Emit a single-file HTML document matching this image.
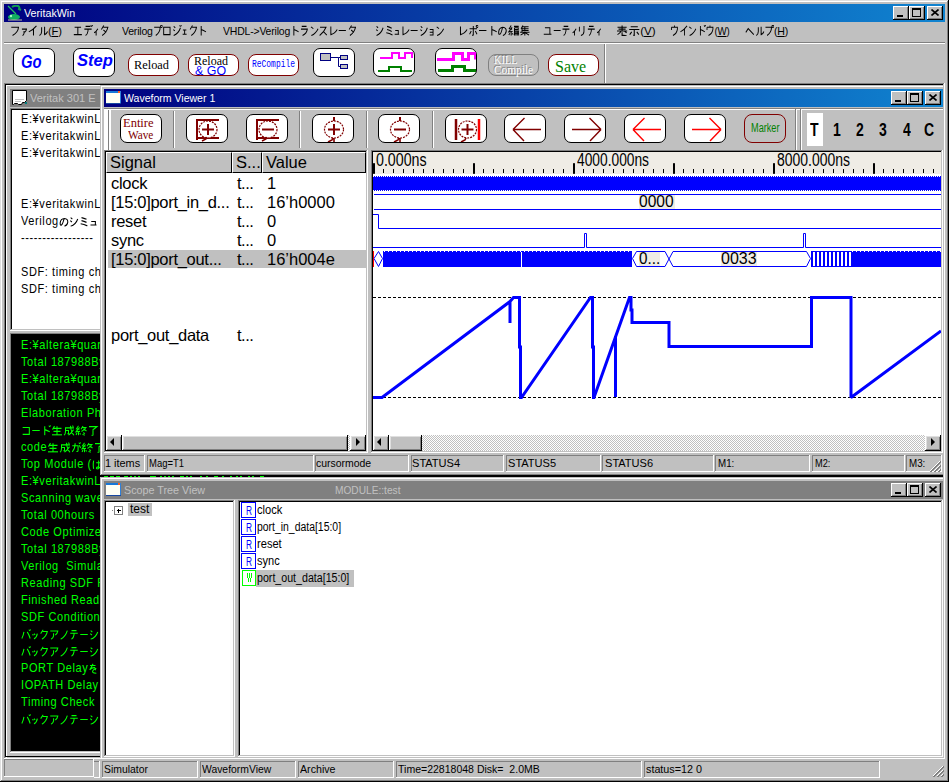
<!DOCTYPE html><html><head><meta charset="utf-8"><style>
html,body{margin:0;padding:0;background:#c0c0c0;overflow:hidden}
#r{position:relative;width:949px;height:782px;overflow:hidden;background:#c0c0c0;font-family:'Liberation Sans', sans-serif;font-size:12px;color:#000}
#r div{box-sizing:border-box}
</style></head><body><div id="r">
<svg width="0" height="0" style="position:absolute"><defs><symbol id="g30d5" viewBox="0 0 12 12"><path vector-effect="non-scaling-stroke" d="M1.5 2.5H10Q9.5 8 3 11.5"/></symbol><symbol id="g30a1" viewBox="0 0 12 12"><path vector-effect="non-scaling-stroke" d="M2 4.5H9.5Q9 7 6.5 8M5.5 6.5V9Q5 11 3 11.5"/></symbol><symbol id="g30a2" viewBox="0 0 12 12"><path vector-effect="non-scaling-stroke" d="M1.5 2H10.5Q10 5 7.5 6.5M5.5 4.5V7.5Q5 10 2.5 11.5"/></symbol><symbol id="g30a4" viewBox="0 0 12 12"><path vector-effect="non-scaling-stroke" d="M10.5 1Q7 5 1.5 7.5M7 4.5V11.5"/></symbol><symbol id="g30eb" viewBox="0 0 12 12"><path vector-effect="non-scaling-stroke" d="M4 2.5V7Q4 10 1.5 11.5M7.5 2V10.5Q9.5 10 11 7"/></symbol><symbol id="g30a8" viewBox="0 0 12 12"><path vector-effect="non-scaling-stroke" d="M2 2.5H10M6 2.5V10.5M1 10.5H11"/></symbol><symbol id="g30c7" viewBox="0 0 12 12"><path vector-effect="non-scaling-stroke" d="M3 1.5H9M1.5 4.5H10.5M6 4.5V6.5Q5.5 10 3 11.5M9.5 0.3L10.5 2M11.3 0L12 1.3"/></symbol><symbol id="g30c6" viewBox="0 0 12 12"><path vector-effect="non-scaling-stroke" d="M3 1.5H9M1.5 4.5H10.5M6 4.5V6.5Q5.5 10 3 11.5"/></symbol><symbol id="g30a3" viewBox="0 0 12 12"><path vector-effect="non-scaling-stroke" d="M9.5 4Q7 7 3 8.5M6.5 6.5V11.5"/></symbol><symbol id="g30bf" viewBox="0 0 12 12"><path vector-effect="non-scaling-stroke" d="M5 0.5L2 5M4.5 2.5H10Q8.5 8 3 11.5M4.5 5.5L8 8"/></symbol><symbol id="g30d7" viewBox="0 0 12 12"><path vector-effect="non-scaling-stroke" d="M1.5 2.5H9Q9 8 3.5 11.5M10.8 0.3a1.2 1.2 0 1 0 0.01 0"/></symbol><symbol id="g30ed" viewBox="0 0 12 12"><path vector-effect="non-scaling-stroke" d="M2 2.5H10V10.5H2Z"/></symbol><symbol id="g30b8" viewBox="0 0 12 12"><path vector-effect="non-scaling-stroke" d="M2 1.5L4 3M1.5 5L3.5 6.5M2 11.5Q8 9.5 10.5 3M9.5 0.3L10.5 2M11.3 0L12 1.3"/></symbol><symbol id="g30b7" viewBox="0 0 12 12"><path vector-effect="non-scaling-stroke" d="M2 1.5L4 3M1.5 5L3.5 6.5M2 11.5Q8 9.5 10.5 3"/></symbol><symbol id="g30a7" viewBox="0 0 12 12"><path vector-effect="non-scaling-stroke" d="M3 5.5H9M6 5.5V10M2.5 10H9.5"/></symbol><symbol id="g30af" viewBox="0 0 12 12"><path vector-effect="non-scaling-stroke" d="M5 0.5L2 5M4.5 2.5H10Q9 8 3.5 11.5"/></symbol><symbol id="g30c8" viewBox="0 0 12 12"><path vector-effect="non-scaling-stroke" d="M4.5 1V11.5M4.5 5Q7.5 6 10.5 7.5"/></symbol><symbol id="g30c9" viewBox="0 0 12 12"><path vector-effect="non-scaling-stroke" d="M4.5 1V11.5M4.5 5Q7.5 6 10.5 7.5M9.5 0.3L10.5 2M11.3 0L12 1.3"/></symbol><symbol id="g30e9" viewBox="0 0 12 12"><path vector-effect="non-scaling-stroke" d="M3 1.5H9M2 4.5H10Q9.5 9 4 11.5"/></symbol><symbol id="g30f3" viewBox="0 0 12 12"><path vector-effect="non-scaling-stroke" d="M2 2L5 4M2.5 11.5Q8 9.5 11 4"/></symbol><symbol id="g30b9" viewBox="0 0 12 12"><path vector-effect="non-scaling-stroke" d="M2 2.5H9.5Q7 8 1.5 11.5M6 7L10.5 11"/></symbol><symbol id="g30ec" viewBox="0 0 12 12"><path vector-effect="non-scaling-stroke" d="M3 1.5V10.5Q8 9.5 11 5"/></symbol><symbol id="g30fc" viewBox="0 0 12 12"><path vector-effect="non-scaling-stroke" d="M1.5 6H10.5"/></symbol><symbol id="g30df" viewBox="0 0 12 12"><path vector-effect="non-scaling-stroke" d="M3 1.5Q6 2 9 3.5M3 5Q6 5.5 9 7M2 8.5Q6 9 10 11"/></symbol><symbol id="g30e5" viewBox="0 0 12 12"><path vector-effect="non-scaling-stroke" d="M3 6H8.5V10M2 10H10"/></symbol><symbol id="g30e7" viewBox="0 0 12 12"><path vector-effect="non-scaling-stroke" d="M3 5H9V11H3M3 8H9"/></symbol><symbol id="g30dd" viewBox="0 0 12 12"><path vector-effect="non-scaling-stroke" d="M1.5 4H10.5M6 1V10.5Q6 11.5 4.5 11M3.5 6.5L1.5 10M8.5 6.5L10.5 10M10.8 0.3a1.2 1.2 0 1 0 0.01 0"/></symbol><symbol id="g306e" viewBox="0 0 12 12"><path vector-effect="non-scaling-stroke" d="M6 3Q4.5 9 3 10Q1 11 1.5 7Q2 3 6.5 2.5Q11 3 10.5 7Q10 10.5 6.5 11.5"/></symbol><symbol id="g7de8" viewBox="0 0 12 12"><path vector-effect="non-scaling-stroke" d="M3.5 0.5L1.5 4L4.5 4.5M4.5 2.5L1 7.5L5 7M3.5 7V11.5M2 9L1 11M4.8 9L5.5 10.5M6.5 1.5H11.5M7 3H11V5H7M7 3V11.5M7 6.5H11.5V11.5M8.5 6.5V11.5M10 6.5V11.5M7 9H11.5"/></symbol><symbol id="g96c6" viewBox="0 0 12 12"><path vector-effect="non-scaling-stroke" d="M4 0.5L2 4M3.5 2H10M6 2V6.5M3 4H10M3 6H10M3 2V8M1 8H11M6 7V11.5M5.5 8.5L1.5 11M6.5 8.5L10.5 11"/></symbol><symbol id="g30e6" viewBox="0 0 12 12"><path vector-effect="non-scaling-stroke" d="M2.5 3H9V10M1 10H11"/></symbol><symbol id="g30ea" viewBox="0 0 12 12"><path vector-effect="non-scaling-stroke" d="M3 2V7M9 1V7Q9 10 5 11.5"/></symbol><symbol id="g8868" viewBox="0 0 12 12"><path vector-effect="non-scaling-stroke" d="M1.5 2.5H10.5M2.5 4.5H9.5M1 6.5H11M6 0.5V6.5M5 6.5Q4 9 1.5 10.5M6 8V11.5Q8 11 10.5 12M8.5 7L10.5 8.5"/></symbol><symbol id="g793a" viewBox="0 0 12 12"><path vector-effect="non-scaling-stroke" d="M2.5 2H9.5M1 5H11M6 5V11.5L5 11M3.5 7.5L1.5 10.5M8.5 7.5L10.5 10.5"/></symbol><symbol id="g30a6" viewBox="0 0 12 12"><path vector-effect="non-scaling-stroke" d="M6 0.5V2.5M2 2.5H10V4.5Q9.5 9 4 11.5M2 2.5V5.5"/></symbol><symbol id="g30d8" viewBox="0 0 12 12"><path vector-effect="non-scaling-stroke" d="M1 8L4 4L11 10.5"/></symbol><symbol id="g30b3" viewBox="0 0 12 12"><path vector-effect="non-scaling-stroke" d="M2 2.5H10V10.5H2"/></symbol><symbol id="g751f" viewBox="0 0 12 12"><path vector-effect="non-scaling-stroke" d="M3.5 1L1.5 5M3 3.5H10.5M6 1V11M2.5 7H9.5M1 11H11"/></symbol><symbol id="g6210" viewBox="0 0 12 12"><path vector-effect="non-scaling-stroke" d="M2 3H11M2.5 3V7Q2.5 10 1 11.5M2.5 6H5.5V9.5L4.5 9.5M7.5 0.5Q8 8 11 11.5M10.5 5Q8.5 9 5.5 11.5M9 0.5L10.5 1.5"/></symbol><symbol id="g7d42" viewBox="0 0 12 12"><path vector-effect="non-scaling-stroke" d="M3.5 0.5L1.5 4L4.5 4.5M4.5 2.5L1 7.5L5 7M3.5 7V11.5M2 9L1 11M4.8 9L5.5 10.5M8 1L6 4.5M7.5 2.5H11Q9.5 5 6.5 7M8.5 4L11.5 6.5M8 8.5L10 9.5M7.5 10.5L10 11.5"/></symbol><symbol id="g4e86" viewBox="0 0 12 12"><path vector-effect="non-scaling-stroke" d="M2 1.5H10Q8 3.5 6 5V11Q6 12 4.5 11.5"/></symbol><symbol id="g304c" viewBox="0 0 12 12"><path vector-effect="non-scaling-stroke" d="M1.5 4H8.5V9Q8.5 11 6.5 10.5M5 1Q5 7 1.5 11M10 3.5L11.5 6.5M9.5 0.3L10.5 2M11.3 0L12 1.3"/></symbol><symbol id="g306f" viewBox="0 0 12 12"><path vector-effect="non-scaling-stroke" d="M2 1.5Q1 6 2 11M5 4H10.5M8 1.5V9.5Q8 11.5 6 11Q4.5 10 6 9Q9 8.5 11 11"/></symbol><symbol id="g30d0" viewBox="0 0 12 12"><path vector-effect="non-scaling-stroke" d="M3.5 3Q3 7 1 10.5M7.5 3Q9.5 6 11 10.5M9.5 0.3L10.5 2M11.3 0L12 1.3"/></symbol><symbol id="g30c3" viewBox="0 0 12 12"><path vector-effect="non-scaling-stroke" d="M2.5 5.5L3.5 7M5 5L6 6.5M9.5 5Q8.5 9.5 4.5 11"/></symbol><symbol id="g30ce" viewBox="0 0 12 12"><path vector-effect="non-scaling-stroke" d="M10 1.5Q8 8 2 11.5"/></symbol><symbol id="g3092" viewBox="0 0 12 12"><path vector-effect="non-scaling-stroke" d="M2.5 2.5H9M6 0.5Q4 5 2 7.5Q5 4.5 8 5Q9 6 9 8M10 6Q6 7 5.5 9Q5 11.5 10 11.5"/></symbol></defs></svg>
<div style="position:absolute;left:0px;top:0px;width:949px;height:1px;background:#dfdfdf"></div>
<div style="position:absolute;left:0px;top:0px;width:1px;height:782px;background:#dfdfdf"></div>
<div style="position:absolute;left:1px;top:1px;width:947px;height:1px;background:#ffffff"></div>
<div style="position:absolute;left:1px;top:1px;width:1px;height:780px;background:#ffffff"></div>
<div style="position:absolute;left:0px;top:781px;width:949px;height:1px;background:#000000"></div>
<div style="position:absolute;left:948px;top:0px;width:1px;height:782px;background:#000000"></div>
<div style="position:absolute;left:1px;top:780px;width:947px;height:1px;background:#808080"></div>
<div style="position:absolute;left:947px;top:1px;width:1px;height:780px;background:#808080"></div>
<div style="position:absolute;left:4px;top:4px;width:941px;height:18px;background:linear-gradient(to right,#000080,#1084d0)"></div>
<div id="f1" style="position:absolute;left:24px;top:4px;white-space:nowrap;transform-origin:0 0;transform:scaleX(0.9310);color:#fff;font-size:11.5px;line-height:18px">VeritakWin</div>
<div style="position:absolute;left:893px;top:6px;width:16px;height:14px;background:#c0c0c0"></div>
<div style="position:absolute;left:893px;top:6px;width:16px;height:1px;background:#ffffff"></div>
<div style="position:absolute;left:893px;top:6px;width:1px;height:14px;background:#ffffff"></div>
<div style="position:absolute;left:893px;top:19px;width:16px;height:1px;background:#000000"></div>
<div style="position:absolute;left:908px;top:6px;width:1px;height:14px;background:#000000"></div>
<div style="position:absolute;left:894px;top:18px;width:14px;height:1px;background:#808080"></div>
<div style="position:absolute;left:907px;top:7px;width:1px;height:12px;background:#808080"></div>
<div style="position:absolute;left:909px;top:6px;width:16px;height:14px;background:#c0c0c0"></div>
<div style="position:absolute;left:909px;top:6px;width:16px;height:1px;background:#ffffff"></div>
<div style="position:absolute;left:909px;top:6px;width:1px;height:14px;background:#ffffff"></div>
<div style="position:absolute;left:909px;top:19px;width:16px;height:1px;background:#000000"></div>
<div style="position:absolute;left:924px;top:6px;width:1px;height:14px;background:#000000"></div>
<div style="position:absolute;left:910px;top:18px;width:14px;height:1px;background:#808080"></div>
<div style="position:absolute;left:923px;top:7px;width:1px;height:12px;background:#808080"></div>
<div style="position:absolute;left:927px;top:6px;width:16px;height:14px;background:#c0c0c0"></div>
<div style="position:absolute;left:927px;top:6px;width:16px;height:1px;background:#ffffff"></div>
<div style="position:absolute;left:927px;top:6px;width:1px;height:14px;background:#ffffff"></div>
<div style="position:absolute;left:927px;top:19px;width:16px;height:1px;background:#000000"></div>
<div style="position:absolute;left:942px;top:6px;width:1px;height:14px;background:#000000"></div>
<div style="position:absolute;left:928px;top:18px;width:14px;height:1px;background:#808080"></div>
<div style="position:absolute;left:941px;top:7px;width:1px;height:12px;background:#808080"></div>
<div style="position:absolute;left:897px;top:15px;width:6px;height:2px;background:#000"></div>
<div style="position:absolute;left:912px;top:8px;width:9px;height:9px;border:1px solid #000;border-top-width:2px"></div>
<svg style="position:absolute;left:931px;top:9px" width="8" height="7"><path d="M0.5 0.5L7.5 6.5M7.5 0.5L0.5 6.5" stroke="#000" stroke-width="1.6"/></svg>
<div id="f2" style="position:absolute;left:10px;top:25px;white-space:nowrap;transform-origin:0 0;transform:scaleX(0.9731);font-size:11.5px;line-height:13px;letter-spacing:-0.2px"><svg width="10.5" height="11" viewBox="0 0 12 12" preserveAspectRatio="none" style="vertical-align:-1px;overflow:visible"><use href="#g30d5" fill="none" stroke="currentColor" stroke-width="1.05"/></svg><svg width="7.5" height="11" viewBox="0 0 12 12" preserveAspectRatio="none" style="vertical-align:-1px;overflow:visible"><use href="#g30a1" fill="none" stroke="currentColor" stroke-width="1.05"/></svg><svg width="10.5" height="11" viewBox="0 0 12 12" preserveAspectRatio="none" style="vertical-align:-1px;overflow:visible"><use href="#g30a4" fill="none" stroke="currentColor" stroke-width="1.05"/></svg><svg width="10.5" height="11" viewBox="0 0 12 12" preserveAspectRatio="none" style="vertical-align:-1px;overflow:visible"><use href="#g30eb" fill="none" stroke="currentColor" stroke-width="1.05"/></svg>(<u>F</u>)</div>
<div id="f3" style="position:absolute;left:73px;top:25px;white-space:nowrap;transform-origin:0 0;transform:scaleX(0.9231);font-size:11.5px;line-height:13px;letter-spacing:-0.2px"><svg width="10.5" height="11" viewBox="0 0 12 12" preserveAspectRatio="none" style="vertical-align:-1px;overflow:visible"><use href="#g30a8" fill="none" stroke="currentColor" stroke-width="1.05"/></svg><svg width="10.5" height="11" viewBox="0 0 12 12" preserveAspectRatio="none" style="vertical-align:-1px;overflow:visible"><use href="#g30c7" fill="none" stroke="currentColor" stroke-width="1.05"/></svg><svg width="7.5" height="11" viewBox="0 0 12 12" preserveAspectRatio="none" style="vertical-align:-1px;overflow:visible"><use href="#g30a3" fill="none" stroke="currentColor" stroke-width="1.05"/></svg><svg width="10.5" height="11" viewBox="0 0 12 12" preserveAspectRatio="none" style="vertical-align:-1px;overflow:visible"><use href="#g30bf" fill="none" stroke="currentColor" stroke-width="1.05"/></svg></div>
<div id="f4" style="position:absolute;left:122px;top:25px;white-space:nowrap;transform-origin:0 0;transform:scaleX(0.9109);font-size:11.5px;line-height:13px;letter-spacing:-0.2px">Verilog<svg width="10.5" height="11" viewBox="0 0 12 12" preserveAspectRatio="none" style="vertical-align:-1px;overflow:visible"><use href="#g30d7" fill="none" stroke="currentColor" stroke-width="1.05"/></svg><svg width="10.5" height="11" viewBox="0 0 12 12" preserveAspectRatio="none" style="vertical-align:-1px;overflow:visible"><use href="#g30ed" fill="none" stroke="currentColor" stroke-width="1.05"/></svg><svg width="10.5" height="11" viewBox="0 0 12 12" preserveAspectRatio="none" style="vertical-align:-1px;overflow:visible"><use href="#g30b8" fill="none" stroke="currentColor" stroke-width="1.05"/></svg><svg width="7.5" height="11" viewBox="0 0 12 12" preserveAspectRatio="none" style="vertical-align:-1px;overflow:visible"><use href="#g30a7" fill="none" stroke="currentColor" stroke-width="1.05"/></svg><svg width="10.5" height="11" viewBox="0 0 12 12" preserveAspectRatio="none" style="vertical-align:-1px;overflow:visible"><use href="#g30af" fill="none" stroke="currentColor" stroke-width="1.05"/></svg><svg width="10.5" height="11" viewBox="0 0 12 12" preserveAspectRatio="none" style="vertical-align:-1px;overflow:visible"><use href="#g30c8" fill="none" stroke="currentColor" stroke-width="1.05"/></svg></div>
<div id="f5" style="position:absolute;left:223px;top:25px;white-space:nowrap;transform-origin:0 0;transform:scaleX(0.9091);font-size:11.5px;line-height:13px;letter-spacing:-0.2px">VHDL-&gt;Verilog<svg width="10.5" height="11" viewBox="0 0 12 12" preserveAspectRatio="none" style="vertical-align:-1px;overflow:visible"><use href="#g30c8" fill="none" stroke="currentColor" stroke-width="1.05"/></svg><svg width="10.5" height="11" viewBox="0 0 12 12" preserveAspectRatio="none" style="vertical-align:-1px;overflow:visible"><use href="#g30e9" fill="none" stroke="currentColor" stroke-width="1.05"/></svg><svg width="10.5" height="11" viewBox="0 0 12 12" preserveAspectRatio="none" style="vertical-align:-1px;overflow:visible"><use href="#g30f3" fill="none" stroke="currentColor" stroke-width="1.05"/></svg><svg width="10.5" height="11" viewBox="0 0 12 12" preserveAspectRatio="none" style="vertical-align:-1px;overflow:visible"><use href="#g30b9" fill="none" stroke="currentColor" stroke-width="1.05"/></svg><svg width="10.5" height="11" viewBox="0 0 12 12" preserveAspectRatio="none" style="vertical-align:-1px;overflow:visible"><use href="#g30ec" fill="none" stroke="currentColor" stroke-width="1.05"/></svg><svg width="10.5" height="11" viewBox="0 0 12 12" preserveAspectRatio="none" style="vertical-align:-1px;overflow:visible"><use href="#g30fc" fill="none" stroke="currentColor" stroke-width="1.05"/></svg><svg width="10.5" height="11" viewBox="0 0 12 12" preserveAspectRatio="none" style="vertical-align:-1px;overflow:visible"><use href="#g30bf" fill="none" stroke="currentColor" stroke-width="1.05"/></svg></div>
<div id="f6" style="position:absolute;left:375px;top:25px;white-space:nowrap;transform-origin:0 0;transform:scaleX(0.8846);font-size:11.5px;line-height:13px;letter-spacing:-0.2px"><svg width="10.5" height="11" viewBox="0 0 12 12" preserveAspectRatio="none" style="vertical-align:-1px;overflow:visible"><use href="#g30b7" fill="none" stroke="currentColor" stroke-width="1.05"/></svg><svg width="10.5" height="11" viewBox="0 0 12 12" preserveAspectRatio="none" style="vertical-align:-1px;overflow:visible"><use href="#g30df" fill="none" stroke="currentColor" stroke-width="1.05"/></svg><svg width="7.5" height="11" viewBox="0 0 12 12" preserveAspectRatio="none" style="vertical-align:-1px;overflow:visible"><use href="#g30e5" fill="none" stroke="currentColor" stroke-width="1.05"/></svg><svg width="10.5" height="11" viewBox="0 0 12 12" preserveAspectRatio="none" style="vertical-align:-1px;overflow:visible"><use href="#g30ec" fill="none" stroke="currentColor" stroke-width="1.05"/></svg><svg width="10.5" height="11" viewBox="0 0 12 12" preserveAspectRatio="none" style="vertical-align:-1px;overflow:visible"><use href="#g30fc" fill="none" stroke="currentColor" stroke-width="1.05"/></svg><svg width="10.5" height="11" viewBox="0 0 12 12" preserveAspectRatio="none" style="vertical-align:-1px;overflow:visible"><use href="#g30b7" fill="none" stroke="currentColor" stroke-width="1.05"/></svg><svg width="7.5" height="11" viewBox="0 0 12 12" preserveAspectRatio="none" style="vertical-align:-1px;overflow:visible"><use href="#g30e7" fill="none" stroke="currentColor" stroke-width="1.05"/></svg><svg width="10.5" height="11" viewBox="0 0 12 12" preserveAspectRatio="none" style="vertical-align:-1px;overflow:visible"><use href="#g30f3" fill="none" stroke="currentColor" stroke-width="1.05"/></svg></div>
<div id="f7" style="position:absolute;left:458px;top:25px;white-space:nowrap;transform-origin:0 0;transform:scaleX(0.9412);font-size:11.5px;line-height:13px;letter-spacing:-0.2px"><svg width="10.5" height="11" viewBox="0 0 12 12" preserveAspectRatio="none" style="vertical-align:-1px;overflow:visible"><use href="#g30ec" fill="none" stroke="currentColor" stroke-width="1.05"/></svg><svg width="10.5" height="11" viewBox="0 0 12 12" preserveAspectRatio="none" style="vertical-align:-1px;overflow:visible"><use href="#g30dd" fill="none" stroke="currentColor" stroke-width="1.05"/></svg><svg width="10.5" height="11" viewBox="0 0 12 12" preserveAspectRatio="none" style="vertical-align:-1px;overflow:visible"><use href="#g30fc" fill="none" stroke="currentColor" stroke-width="1.05"/></svg><svg width="10.5" height="11" viewBox="0 0 12 12" preserveAspectRatio="none" style="vertical-align:-1px;overflow:visible"><use href="#g30c8" fill="none" stroke="currentColor" stroke-width="1.05"/></svg><svg width="10.5" height="11" viewBox="0 0 12 12" preserveAspectRatio="none" style="vertical-align:-1px;overflow:visible"><use href="#g306e" fill="none" stroke="currentColor" stroke-width="1.05"/></svg><svg width="12" height="11" viewBox="0 0 12 12" preserveAspectRatio="none" style="vertical-align:-1px;overflow:visible"><use href="#g7de8" fill="none" stroke="currentColor" stroke-width="1.05"/></svg><svg width="12" height="11" viewBox="0 0 12 12" preserveAspectRatio="none" style="vertical-align:-1px;overflow:visible"><use href="#g96c6" fill="none" stroke="currentColor" stroke-width="1.05"/></svg></div>
<div id="f8" style="position:absolute;left:543px;top:25px;white-space:nowrap;transform-origin:0 0;transform:scaleX(0.8741);font-size:11.5px;line-height:13px;letter-spacing:-0.2px"><svg width="10.5" height="11" viewBox="0 0 12 12" preserveAspectRatio="none" style="vertical-align:-1px;overflow:visible"><use href="#g30e6" fill="none" stroke="currentColor" stroke-width="1.05"/></svg><svg width="10.5" height="11" viewBox="0 0 12 12" preserveAspectRatio="none" style="vertical-align:-1px;overflow:visible"><use href="#g30fc" fill="none" stroke="currentColor" stroke-width="1.05"/></svg><svg width="10.5" height="11" viewBox="0 0 12 12" preserveAspectRatio="none" style="vertical-align:-1px;overflow:visible"><use href="#g30c6" fill="none" stroke="currentColor" stroke-width="1.05"/></svg><svg width="7.5" height="11" viewBox="0 0 12 12" preserveAspectRatio="none" style="vertical-align:-1px;overflow:visible"><use href="#g30a3" fill="none" stroke="currentColor" stroke-width="1.05"/></svg><svg width="10.5" height="11" viewBox="0 0 12 12" preserveAspectRatio="none" style="vertical-align:-1px;overflow:visible"><use href="#g30ea" fill="none" stroke="currentColor" stroke-width="1.05"/></svg><svg width="10.5" height="11" viewBox="0 0 12 12" preserveAspectRatio="none" style="vertical-align:-1px;overflow:visible"><use href="#g30c6" fill="none" stroke="currentColor" stroke-width="1.05"/></svg><svg width="7.5" height="11" viewBox="0 0 12 12" preserveAspectRatio="none" style="vertical-align:-1px;overflow:visible"><use href="#g30a3" fill="none" stroke="currentColor" stroke-width="1.05"/></svg></div>
<div id="f9" style="position:absolute;left:616px;top:25px;white-space:nowrap;transform-origin:0 0;transform:scaleX(1.0143);font-size:11.5px;line-height:13px;letter-spacing:-0.2px"><svg width="12" height="11" viewBox="0 0 12 12" preserveAspectRatio="none" style="vertical-align:-1px;overflow:visible"><use href="#g8868" fill="none" stroke="currentColor" stroke-width="1.05"/></svg><svg width="12" height="11" viewBox="0 0 12 12" preserveAspectRatio="none" style="vertical-align:-1px;overflow:visible"><use href="#g793a" fill="none" stroke="currentColor" stroke-width="1.05"/></svg>(<u>V</u>)</div>
<div id="f10" style="position:absolute;left:670px;top:25px;white-space:nowrap;transform-origin:0 0;transform:scaleX(0.8458);font-size:11.5px;line-height:13px;letter-spacing:-0.2px"><svg width="10.5" height="11" viewBox="0 0 12 12" preserveAspectRatio="none" style="vertical-align:-1px;overflow:visible"><use href="#g30a6" fill="none" stroke="currentColor" stroke-width="1.05"/></svg><svg width="10.5" height="11" viewBox="0 0 12 12" preserveAspectRatio="none" style="vertical-align:-1px;overflow:visible"><use href="#g30a4" fill="none" stroke="currentColor" stroke-width="1.05"/></svg><svg width="10.5" height="11" viewBox="0 0 12 12" preserveAspectRatio="none" style="vertical-align:-1px;overflow:visible"><use href="#g30f3" fill="none" stroke="currentColor" stroke-width="1.05"/></svg><svg width="10.5" height="11" viewBox="0 0 12 12" preserveAspectRatio="none" style="vertical-align:-1px;overflow:visible"><use href="#g30c9" fill="none" stroke="currentColor" stroke-width="1.05"/></svg><svg width="10.5" height="11" viewBox="0 0 12 12" preserveAspectRatio="none" style="vertical-align:-1px;overflow:visible"><use href="#g30a6" fill="none" stroke="currentColor" stroke-width="1.05"/></svg>(<u>W</u>)</div>
<div id="f11" style="position:absolute;left:745px;top:25px;white-space:nowrap;transform-origin:0 0;transform:scaleX(0.9179);font-size:11.5px;line-height:13px;letter-spacing:-0.2px"><svg width="10.5" height="11" viewBox="0 0 12 12" preserveAspectRatio="none" style="vertical-align:-1px;overflow:visible"><use href="#g30d8" fill="none" stroke="currentColor" stroke-width="1.05"/></svg><svg width="10.5" height="11" viewBox="0 0 12 12" preserveAspectRatio="none" style="vertical-align:-1px;overflow:visible"><use href="#g30eb" fill="none" stroke="currentColor" stroke-width="1.05"/></svg><svg width="10.5" height="11" viewBox="0 0 12 12" preserveAspectRatio="none" style="vertical-align:-1px;overflow:visible"><use href="#g30d7" fill="none" stroke="currentColor" stroke-width="1.05"/></svg>(<u>H</u>)</div>
<div style="position:absolute;left:4px;top:42px;width:941px;height:1px;background:#808080"></div>
<div style="position:absolute;left:4px;top:43px;width:941px;height:1px;background:#ffffff"></div>
<div style="position:absolute;left:13px;top:48px;width:42px;height:29px;background:#fff;border:1px solid #000;border-radius:7px"></div>
<div id="f12" style="position:absolute;left:21px;top:50px;white-space:nowrap;transform-origin:0 0;transform:scaleX(0.7778);font:italic bold 19px/24px Liberation Sans;color:#0000ff">Go</div>
<div style="position:absolute;left:73px;top:48px;width:42px;height:29px;background:#fff;border:1px solid #000;border-radius:7px"></div>
<div id="f13" style="position:absolute;left:77px;top:49px;white-space:nowrap;transform-origin:0 0;transform:scaleX(0.9722);font:italic bold 17px/24px Liberation Sans;color:#0000ff">Step</div>
<div style="position:absolute;left:128px;top:54px;width:51px;height:22px;background:#fff;border:1px solid #800000;border-radius:8px"></div>
<div id="f14" style="position:absolute;left:134px;top:57px;white-space:nowrap;transform-origin:0 0;transform:scaleX(0.9487);font:13px/16px Liberation Serif;color:#000">Reload</div>
<div style="position:absolute;left:188px;top:54px;width:51px;height:22px;background:#fff;border:1px solid #800000;border-radius:8px"></div>
<div id="f15" style="position:absolute;left:194px;top:55px;white-space:nowrap;transform-origin:0 0;transform:scaleX(0.9231);font:13px/12px Liberation Serif;color:#000">Reload</div>
<div id="f16" style="position:absolute;left:195px;top:65px;white-space:nowrap;transform-origin:0 0;transform:scaleX(1.0345);font:12px/12px Liberation Sans;color:#0000ff">&amp; GO</div>
<div style="position:absolute;left:248px;top:54px;width:51px;height:22px;background:#fff;border:1px solid #800000;border-radius:8px"></div>
<div id="f17" style="position:absolute;left:252px;top:59px;white-space:nowrap;transform-origin:0 0;transform:scaleX(0.7963);font:10px/12px Liberation Mono;color:#0000ff">ReCompile</div>
<div style="position:absolute;left:313px;top:48px;width:42px;height:29px;background:#fff;border:1px solid #000;border-radius:7px"><svg width="40" height="27" style="position:absolute;left:0;top:0"><rect x="6.5" y="4.5" width="10" height="7" fill="#c0c0c0" stroke="#000080"/><rect x="26.5" y="6.5" width="7" height="4" fill="#c0c0c0" stroke="#000080"/><rect x="26.5" y="15.5" width="7" height="4" fill="#c0c0c0" stroke="#000080"/><path d="M17 8.5H24.5V17.5H26M24.5 8.5H26" fill="none" stroke="#000080"/></svg></div>
<div style="position:absolute;left:373px;top:48px;width:42px;height:29px;background:#fff;border:1px solid #000;border-radius:7px"><svg width="40" height="27" style="position:absolute;left:0;top:0"><path d="M6 9H18V4H25V9H31V4H38V9" fill="none" stroke="#ff00ff" stroke-width="2"/><path d="M4 22H15V18H27V22H38" fill="none" stroke="#008000" stroke-width="2"/></svg></div>
<div style="position:absolute;left:435px;top:48px;width:42px;height:29px;background:#fff;border:1px solid #000;border-radius:7px"><svg width="40" height="27" style="position:absolute;left:0;top:0"><path d="M1 10.5H17.5V4.5H26.5V10.5H32.5V4.5H39.5V10.5" fill="none" stroke="#ff00ff" stroke-width="3"/><path d="M2 21.5H16.5V17.5H28.5V21.5H40" fill="none" stroke="#008000" stroke-width="3"/></svg></div>
<div style="position:absolute;left:488px;top:54px;width:51px;height:22px;background:#c0c0c0;border:1px solid #808080;border-radius:8px"></div>
<div id="f18" style="position:absolute;left:494px;top:54px;white-space:nowrap;transform-origin:0 0;transform:scaleX(0.7931);font:13px/12px Liberation Serif;color:#fff;text-shadow:-1px -1px 0 #808080">KILL</div>
<div id="f19" style="position:absolute;left:494px;top:64px;white-space:nowrap;transform-origin:0 0;transform:scaleX(0.8723);font:13px/12px Liberation Serif;color:#fff;text-shadow:-1px -1px 0 #808080">Compile</div>
<div style="position:absolute;left:548px;top:54px;width:51px;height:22px;background:#fff;border:1px solid #800000;border-radius:8px"></div>
<div id="f20" style="position:absolute;left:555px;top:59px;white-space:nowrap;transform-origin:0 0;transform:scaleX(0.9412);font:17px/16px Liberation Serif;color:#008000">Save</div>
<div style="position:absolute;left:604px;top:44px;width:1px;height:39px;background:#808080"></div>
<div style="position:absolute;left:605px;top:44px;width:1px;height:39px;background:#ffffff"></div>
<div style="position:absolute;left:4px;top:83px;width:941px;height:1px;background:#808080"></div>
<div style="position:absolute;left:4px;top:83px;width:1px;height:676px;background:#808080"></div>
<div style="position:absolute;left:4px;top:758px;width:941px;height:1px;background:#ffffff"></div>
<div style="position:absolute;left:944px;top:83px;width:1px;height:676px;background:#ffffff"></div>
<div style="position:absolute;left:5px;top:84px;width:939px;height:1px;background:#000000"></div>
<div style="position:absolute;left:5px;top:84px;width:1px;height:674px;background:#000000"></div>
<div style="position:absolute;left:5px;top:757px;width:939px;height:1px;background:#c0c0c0"></div>
<div style="position:absolute;left:943px;top:84px;width:1px;height:674px;background:#c0c0c0"></div>
<div style="position:absolute;left:6px;top:85px;width:937px;height:673px;background:#c0c0c0"></div>
<div style="position:absolute;left:6px;top:85px;width:1px;height:673px;background:#ffffff"></div>
<div style="position:absolute;left:6px;top:85px;width:937px;height:1px;background:#ffffff"></div>
<div style="position:absolute;left:10px;top:89px;width:100px;height:18px;background:#808080"></div>
<div id="f21" style="position:absolute;left:30px;top:89px;white-space:nowrap;transform-origin:0 0;transform:scaleX(0.9583);color:#c0c0c0;font-size:11.5px;line-height:18px">Veritak 301 E</div>
<div style="position:absolute;left:10px;top:108px;width:92px;height:1px;background:#808080"></div>
<div style="position:absolute;left:10px;top:108px;width:1px;height:223px;background:#808080"></div>
<div style="position:absolute;left:10px;top:330px;width:92px;height:1px;background:#ffffff"></div>
<div style="position:absolute;left:101px;top:108px;width:1px;height:223px;background:#ffffff"></div>
<div style="position:absolute;left:11px;top:109px;width:90px;height:1px;background:#000000"></div>
<div style="position:absolute;left:11px;top:109px;width:1px;height:221px;background:#000000"></div>
<div style="position:absolute;left:11px;top:329px;width:90px;height:1px;background:#c0c0c0"></div>
<div style="position:absolute;left:100px;top:109px;width:1px;height:221px;background:#c0c0c0"></div>
<div style="position:absolute;left:12px;top:110px;width:89px;height:219px;background:#ffffff"></div>
<div style="position:absolute;left:10px;top:333px;width:92px;height:1px;background:#808080"></div>
<div style="position:absolute;left:10px;top:333px;width:1px;height:420px;background:#808080"></div>
<div style="position:absolute;left:10px;top:752px;width:92px;height:1px;background:#ffffff"></div>
<div style="position:absolute;left:101px;top:333px;width:1px;height:420px;background:#ffffff"></div>
<div style="position:absolute;left:11px;top:334px;width:90px;height:1px;background:#000000"></div>
<div style="position:absolute;left:11px;top:334px;width:1px;height:418px;background:#000000"></div>
<div style="position:absolute;left:11px;top:751px;width:90px;height:1px;background:#c0c0c0"></div>
<div style="position:absolute;left:100px;top:334px;width:1px;height:418px;background:#c0c0c0"></div>
<div style="position:absolute;left:12px;top:335px;width:89px;height:416px;background:#000000"></div>
<div style="position:absolute;left:6px;top:756px;width:95px;height:1px;background:#000000"></div>
<div style="position:absolute;left:100px;top:85px;width:843px;height:391px;background:#c0c0c0"></div>
<div style="position:absolute;left:100px;top:85px;width:843px;height:1px;background:#c0c0c0"></div>
<div style="position:absolute;left:100px;top:85px;width:1px;height:391px;background:#c0c0c0"></div>
<div style="position:absolute;left:101px;top:86px;width:842px;height:1px;background:#ffffff"></div>
<div style="position:absolute;left:101px;top:86px;width:1px;height:390px;background:#ffffff"></div>
<div style="position:absolute;left:100px;top:475px;width:843px;height:1px;background:#000000"></div>
<div style="position:absolute;left:101px;top:474px;width:842px;height:1px;background:#808080"></div>
<div style="position:absolute;left:104px;top:89px;width:839px;height:18px;background:linear-gradient(to right,#000080,#1084d0)"></div>
<div id="f22" style="position:absolute;left:124px;top:89px;white-space:nowrap;transform-origin:0 0;transform:scaleX(0.9151);color:#fff;font-size:11.5px;line-height:18px">Waveform Viewer 1</div>
<div style="position:absolute;left:891px;top:91px;width:16px;height:14px;background:#c0c0c0"></div>
<div style="position:absolute;left:891px;top:91px;width:16px;height:1px;background:#ffffff"></div>
<div style="position:absolute;left:891px;top:91px;width:1px;height:14px;background:#ffffff"></div>
<div style="position:absolute;left:891px;top:104px;width:16px;height:1px;background:#000000"></div>
<div style="position:absolute;left:906px;top:91px;width:1px;height:14px;background:#000000"></div>
<div style="position:absolute;left:892px;top:103px;width:14px;height:1px;background:#808080"></div>
<div style="position:absolute;left:905px;top:92px;width:1px;height:12px;background:#808080"></div>
<div style="position:absolute;left:907px;top:91px;width:16px;height:14px;background:#c0c0c0"></div>
<div style="position:absolute;left:907px;top:91px;width:16px;height:1px;background:#ffffff"></div>
<div style="position:absolute;left:907px;top:91px;width:1px;height:14px;background:#ffffff"></div>
<div style="position:absolute;left:907px;top:104px;width:16px;height:1px;background:#000000"></div>
<div style="position:absolute;left:922px;top:91px;width:1px;height:14px;background:#000000"></div>
<div style="position:absolute;left:908px;top:103px;width:14px;height:1px;background:#808080"></div>
<div style="position:absolute;left:921px;top:92px;width:1px;height:12px;background:#808080"></div>
<div style="position:absolute;left:925px;top:91px;width:16px;height:14px;background:#c0c0c0"></div>
<div style="position:absolute;left:925px;top:91px;width:16px;height:1px;background:#ffffff"></div>
<div style="position:absolute;left:925px;top:91px;width:1px;height:14px;background:#ffffff"></div>
<div style="position:absolute;left:925px;top:104px;width:16px;height:1px;background:#000000"></div>
<div style="position:absolute;left:940px;top:91px;width:1px;height:14px;background:#000000"></div>
<div style="position:absolute;left:926px;top:103px;width:14px;height:1px;background:#808080"></div>
<div style="position:absolute;left:939px;top:92px;width:1px;height:12px;background:#808080"></div>
<div style="position:absolute;left:895px;top:100px;width:6px;height:2px;background:#000"></div>
<div style="position:absolute;left:910px;top:93px;width:9px;height:9px;border:1px solid #000;border-top-width:2px"></div>
<svg style="position:absolute;left:929px;top:94px" width="8" height="7"><path d="M0.5 0.5L7.5 6.5M7.5 0.5L0.5 6.5" stroke="#000" stroke-width="1.6"/></svg>
<div style="position:absolute;left:104px;top:108px;width:839px;height:1px;background:#808080"></div>
<div style="position:absolute;left:104px;top:109px;width:839px;height:1px;background:#ffffff"></div>
<div style="position:absolute;left:104px;top:109px;width:4px;height:41px;background:#ffffff"></div>
<div style="position:absolute;left:108px;top:110px;width:1px;height:40px;background:#808080"></div>
<div style="position:absolute;left:109px;top:110px;width:1px;height:40px;background:#ffffff"></div>
<div style="position:absolute;left:110px;top:110px;width:1px;height:40px;background:#ffffff"></div>
<div style="position:absolute;left:104px;top:150px;width:264px;height:1px;background:#808080"></div>
<div style="position:absolute;left:104px;top:150px;width:1px;height:303px;background:#808080"></div>
<div style="position:absolute;left:104px;top:452px;width:264px;height:1px;background:#ffffff"></div>
<div style="position:absolute;left:367px;top:150px;width:1px;height:303px;background:#ffffff"></div>
<div style="position:absolute;left:105px;top:151px;width:262px;height:1px;background:#000000"></div>
<div style="position:absolute;left:105px;top:151px;width:1px;height:301px;background:#000000"></div>
<div style="position:absolute;left:105px;top:451px;width:262px;height:1px;background:#c0c0c0"></div>
<div style="position:absolute;left:366px;top:151px;width:1px;height:301px;background:#c0c0c0"></div>
<div style="position:absolute;left:106px;top:152px;width:260px;height:299px;background:#ffffff"></div>
<div style="position:absolute;left:371px;top:150px;width:572px;height:1px;background:#808080"></div>
<div style="position:absolute;left:371px;top:150px;width:1px;height:303px;background:#808080"></div>
<div style="position:absolute;left:371px;top:452px;width:572px;height:1px;background:#ffffff"></div>
<div style="position:absolute;left:942px;top:150px;width:1px;height:303px;background:#ffffff"></div>
<div style="position:absolute;left:372px;top:151px;width:570px;height:1px;background:#000000"></div>
<div style="position:absolute;left:372px;top:151px;width:1px;height:301px;background:#000000"></div>
<div style="position:absolute;left:372px;top:451px;width:570px;height:1px;background:#c0c0c0"></div>
<div style="position:absolute;left:941px;top:151px;width:1px;height:301px;background:#c0c0c0"></div>
<div style="position:absolute;left:373px;top:152px;width:568px;height:299px;background:#ffffff"></div>
<div style="position:absolute;left:104px;top:455px;width:41px;height:1px;background:#808080"></div>
<div style="position:absolute;left:104px;top:455px;width:1px;height:17px;background:#808080"></div>
<div style="position:absolute;left:104px;top:471px;width:41px;height:1px;background:#ffffff"></div>
<div style="position:absolute;left:144px;top:455px;width:1px;height:17px;background:#ffffff"></div>
<div style="position:absolute;left:147px;top:455px;width:167px;height:1px;background:#808080"></div>
<div style="position:absolute;left:147px;top:455px;width:1px;height:17px;background:#808080"></div>
<div style="position:absolute;left:147px;top:471px;width:167px;height:1px;background:#ffffff"></div>
<div style="position:absolute;left:313px;top:455px;width:1px;height:17px;background:#ffffff"></div>
<div style="position:absolute;left:315px;top:455px;width:94px;height:1px;background:#808080"></div>
<div style="position:absolute;left:315px;top:455px;width:1px;height:17px;background:#808080"></div>
<div style="position:absolute;left:315px;top:471px;width:94px;height:1px;background:#ffffff"></div>
<div style="position:absolute;left:408px;top:455px;width:1px;height:17px;background:#ffffff"></div>
<div style="position:absolute;left:411px;top:455px;width:93px;height:1px;background:#808080"></div>
<div style="position:absolute;left:411px;top:455px;width:1px;height:17px;background:#808080"></div>
<div style="position:absolute;left:411px;top:471px;width:93px;height:1px;background:#ffffff"></div>
<div style="position:absolute;left:503px;top:455px;width:1px;height:17px;background:#ffffff"></div>
<div style="position:absolute;left:506px;top:455px;width:95px;height:1px;background:#808080"></div>
<div style="position:absolute;left:506px;top:455px;width:1px;height:17px;background:#808080"></div>
<div style="position:absolute;left:506px;top:471px;width:95px;height:1px;background:#ffffff"></div>
<div style="position:absolute;left:600px;top:455px;width:1px;height:17px;background:#ffffff"></div>
<div style="position:absolute;left:602px;top:455px;width:112px;height:1px;background:#808080"></div>
<div style="position:absolute;left:602px;top:455px;width:1px;height:17px;background:#808080"></div>
<div style="position:absolute;left:602px;top:471px;width:112px;height:1px;background:#ffffff"></div>
<div style="position:absolute;left:713px;top:455px;width:1px;height:17px;background:#ffffff"></div>
<div style="position:absolute;left:715px;top:455px;width:95px;height:1px;background:#808080"></div>
<div style="position:absolute;left:715px;top:455px;width:1px;height:17px;background:#808080"></div>
<div style="position:absolute;left:715px;top:471px;width:95px;height:1px;background:#ffffff"></div>
<div style="position:absolute;left:809px;top:455px;width:1px;height:17px;background:#ffffff"></div>
<div style="position:absolute;left:812px;top:455px;width:93px;height:1px;background:#808080"></div>
<div style="position:absolute;left:812px;top:455px;width:1px;height:17px;background:#808080"></div>
<div style="position:absolute;left:812px;top:471px;width:93px;height:1px;background:#ffffff"></div>
<div style="position:absolute;left:904px;top:455px;width:1px;height:17px;background:#ffffff"></div>
<div style="position:absolute;left:906px;top:455px;width:36px;height:1px;background:#808080"></div>
<div style="position:absolute;left:906px;top:455px;width:1px;height:17px;background:#808080"></div>
<div style="position:absolute;left:906px;top:471px;width:36px;height:1px;background:#ffffff"></div>
<div style="position:absolute;left:941px;top:455px;width:1px;height:17px;background:#ffffff"></div>
<div style="position:absolute;left:100px;top:476px;width:843px;height:1px;background:#000000"></div>
<div style="position:absolute;left:104px;top:476px;width:2px;height:1px;background:#00ff00"></div>
<div style="position:absolute;left:106px;top:476px;width:2px;height:1px;background:#00ff00"></div>
<div style="position:absolute;left:110px;top:476px;width:2px;height:1px;background:#00ff00"></div>
<div style="position:absolute;left:112px;top:476px;width:2px;height:1px;background:#00ff00"></div>
<div style="position:absolute;left:116px;top:476px;width:2px;height:1px;background:#00ff00"></div>
<div style="position:absolute;left:118px;top:476px;width:2px;height:1px;background:#00ff00"></div>
<div style="position:absolute;left:124px;top:476px;width:2px;height:1px;background:#00ff00"></div>
<div style="position:absolute;left:126px;top:476px;width:2px;height:1px;background:#00ff00"></div>
<div style="position:absolute;left:130px;top:476px;width:2px;height:1px;background:#00ff00"></div>
<div style="position:absolute;left:134px;top:476px;width:2px;height:1px;background:#00ff00"></div>
<div style="position:absolute;left:138px;top:476px;width:2px;height:1px;background:#00ff00"></div>
<div style="position:absolute;left:150px;top:476px;width:2px;height:1px;background:#00ff00"></div>
<div style="position:absolute;left:152px;top:476px;width:2px;height:1px;background:#00ff00"></div>
<div style="position:absolute;left:154px;top:476px;width:2px;height:1px;background:#00ff00"></div>
<div style="position:absolute;left:160px;top:476px;width:2px;height:1px;background:#00ff00"></div>
<div style="position:absolute;left:164px;top:476px;width:2px;height:1px;background:#00ff00"></div>
<div style="position:absolute;left:168px;top:476px;width:2px;height:1px;background:#00ff00"></div>
<div style="position:absolute;left:172px;top:476px;width:2px;height:1px;background:#00ff00"></div>
<div style="position:absolute;left:180px;top:476px;width:2px;height:1px;background:#00ff00"></div>
<div style="position:absolute;left:182px;top:476px;width:2px;height:1px;background:#00ff00"></div>
<div style="position:absolute;left:186px;top:476px;width:2px;height:1px;background:#00ff00"></div>
<div style="position:absolute;left:190px;top:476px;width:2px;height:1px;background:#00ff00"></div>
<div style="position:absolute;left:200px;top:476px;width:2px;height:1px;background:#00ff00"></div>
<div style="position:absolute;left:206px;top:476px;width:2px;height:1px;background:#00ff00"></div>
<div style="position:absolute;left:214px;top:476px;width:2px;height:1px;background:#00ff00"></div>
<div style="position:absolute;left:216px;top:476px;width:2px;height:1px;background:#00ff00"></div>
<div style="position:absolute;left:222px;top:476px;width:2px;height:1px;background:#00ff00"></div>
<div style="position:absolute;left:230px;top:476px;width:2px;height:1px;background:#00ff00"></div>
<div style="position:absolute;left:236px;top:476px;width:2px;height:1px;background:#00ff00"></div>
<div style="position:absolute;left:240px;top:476px;width:2px;height:1px;background:#00ff00"></div>
<div style="position:absolute;left:248px;top:476px;width:2px;height:1px;background:#00ff00"></div>
<div style="position:absolute;left:252px;top:476px;width:2px;height:1px;background:#00ff00"></div>
<div style="position:absolute;left:260px;top:476px;width:2px;height:1px;background:#00ff00"></div>
<div style="position:absolute;left:262px;top:476px;width:2px;height:1px;background:#00ff00"></div>
<div style="position:absolute;left:100px;top:477px;width:843px;height:281px;background:#c0c0c0"></div>
<div style="position:absolute;left:100px;top:477px;width:843px;height:1px;background:#c0c0c0"></div>
<div style="position:absolute;left:100px;top:477px;width:1px;height:281px;background:#c0c0c0"></div>
<div style="position:absolute;left:101px;top:478px;width:842px;height:1px;background:#ffffff"></div>
<div style="position:absolute;left:101px;top:478px;width:1px;height:280px;background:#ffffff"></div>
<div style="position:absolute;left:104px;top:481px;width:839px;height:18px;background:#808080"></div>
<div id="f23" style="position:absolute;left:124px;top:481px;white-space:nowrap;transform-origin:0 0;transform:scaleX(0.9355);color:#c0c0c0;font-size:11.5px;line-height:18px">Scope Tree View</div>
<div id="f24" style="position:absolute;left:335px;top:481px;white-space:nowrap;transform-origin:0 0;transform:scaleX(0.8831);color:#c0c0c0;font-size:11.5px;line-height:18px">MODULE::test</div>
<div style="position:absolute;left:891px;top:483px;width:16px;height:14px;background:#c0c0c0"></div>
<div style="position:absolute;left:891px;top:483px;width:16px;height:1px;background:#ffffff"></div>
<div style="position:absolute;left:891px;top:483px;width:1px;height:14px;background:#ffffff"></div>
<div style="position:absolute;left:891px;top:496px;width:16px;height:1px;background:#000000"></div>
<div style="position:absolute;left:906px;top:483px;width:1px;height:14px;background:#000000"></div>
<div style="position:absolute;left:892px;top:495px;width:14px;height:1px;background:#808080"></div>
<div style="position:absolute;left:905px;top:484px;width:1px;height:12px;background:#808080"></div>
<div style="position:absolute;left:907px;top:483px;width:16px;height:14px;background:#c0c0c0"></div>
<div style="position:absolute;left:907px;top:483px;width:16px;height:1px;background:#ffffff"></div>
<div style="position:absolute;left:907px;top:483px;width:1px;height:14px;background:#ffffff"></div>
<div style="position:absolute;left:907px;top:496px;width:16px;height:1px;background:#000000"></div>
<div style="position:absolute;left:922px;top:483px;width:1px;height:14px;background:#000000"></div>
<div style="position:absolute;left:908px;top:495px;width:14px;height:1px;background:#808080"></div>
<div style="position:absolute;left:921px;top:484px;width:1px;height:12px;background:#808080"></div>
<div style="position:absolute;left:925px;top:483px;width:16px;height:14px;background:#c0c0c0"></div>
<div style="position:absolute;left:925px;top:483px;width:16px;height:1px;background:#ffffff"></div>
<div style="position:absolute;left:925px;top:483px;width:1px;height:14px;background:#ffffff"></div>
<div style="position:absolute;left:925px;top:496px;width:16px;height:1px;background:#000000"></div>
<div style="position:absolute;left:940px;top:483px;width:1px;height:14px;background:#000000"></div>
<div style="position:absolute;left:926px;top:495px;width:14px;height:1px;background:#808080"></div>
<div style="position:absolute;left:939px;top:484px;width:1px;height:12px;background:#808080"></div>
<div style="position:absolute;left:895px;top:492px;width:6px;height:2px;background:#000"></div>
<div style="position:absolute;left:910px;top:485px;width:9px;height:9px;border:1px solid #000;border-top-width:2px"></div>
<svg style="position:absolute;left:929px;top:486px" width="8" height="7"><path d="M0.5 0.5L7.5 6.5M7.5 0.5L0.5 6.5" stroke="#000" stroke-width="1.6"/></svg>
<div style="position:absolute;left:104px;top:500px;width:131px;height:1px;background:#808080"></div>
<div style="position:absolute;left:104px;top:500px;width:1px;height:257px;background:#808080"></div>
<div style="position:absolute;left:104px;top:756px;width:131px;height:1px;background:#ffffff"></div>
<div style="position:absolute;left:234px;top:500px;width:1px;height:257px;background:#ffffff"></div>
<div style="position:absolute;left:105px;top:501px;width:129px;height:1px;background:#000000"></div>
<div style="position:absolute;left:105px;top:501px;width:1px;height:255px;background:#000000"></div>
<div style="position:absolute;left:105px;top:755px;width:129px;height:1px;background:#c0c0c0"></div>
<div style="position:absolute;left:233px;top:501px;width:1px;height:255px;background:#c0c0c0"></div>
<div style="position:absolute;left:106px;top:502px;width:127px;height:253px;background:#ffffff"></div>
<div style="position:absolute;left:238px;top:500px;width:705px;height:1px;background:#808080"></div>
<div style="position:absolute;left:238px;top:500px;width:1px;height:257px;background:#808080"></div>
<div style="position:absolute;left:238px;top:756px;width:705px;height:1px;background:#ffffff"></div>
<div style="position:absolute;left:942px;top:500px;width:1px;height:257px;background:#ffffff"></div>
<div style="position:absolute;left:239px;top:501px;width:703px;height:1px;background:#000000"></div>
<div style="position:absolute;left:239px;top:501px;width:1px;height:255px;background:#000000"></div>
<div style="position:absolute;left:239px;top:755px;width:703px;height:1px;background:#c0c0c0"></div>
<div style="position:absolute;left:941px;top:501px;width:1px;height:255px;background:#c0c0c0"></div>
<div style="position:absolute;left:240px;top:502px;width:701px;height:253px;background:#ffffff"></div>
<div style="position:absolute;left:4px;top:759px;width:90px;height:1px;background:#808080"></div>
<div style="position:absolute;left:4px;top:759px;width:1px;height:18px;background:#808080"></div>
<div style="position:absolute;left:4px;top:776px;width:90px;height:1px;background:#ffffff"></div>
<div style="position:absolute;left:93px;top:759px;width:1px;height:18px;background:#ffffff"></div>
<div style="position:absolute;left:94px;top:761px;width:6px;height:1px;background:#808080"></div>
<div style="position:absolute;left:99px;top:761px;width:1px;height:17px;background:#ffffff"></div>
<div style="position:absolute;left:94px;top:777px;width:6px;height:1px;background:#ffffff"></div>
<div style="position:absolute;left:102px;top:761px;width:96px;height:1px;background:#808080"></div>
<div style="position:absolute;left:102px;top:761px;width:1px;height:17px;background:#808080"></div>
<div style="position:absolute;left:102px;top:777px;width:96px;height:1px;background:#ffffff"></div>
<div style="position:absolute;left:197px;top:761px;width:1px;height:17px;background:#ffffff"></div>
<div style="position:absolute;left:200px;top:761px;width:96px;height:1px;background:#808080"></div>
<div style="position:absolute;left:200px;top:761px;width:1px;height:17px;background:#808080"></div>
<div style="position:absolute;left:200px;top:777px;width:96px;height:1px;background:#ffffff"></div>
<div style="position:absolute;left:295px;top:761px;width:1px;height:17px;background:#ffffff"></div>
<div style="position:absolute;left:298px;top:761px;width:96px;height:1px;background:#808080"></div>
<div style="position:absolute;left:298px;top:761px;width:1px;height:17px;background:#808080"></div>
<div style="position:absolute;left:298px;top:777px;width:96px;height:1px;background:#ffffff"></div>
<div style="position:absolute;left:393px;top:761px;width:1px;height:17px;background:#ffffff"></div>
<div style="position:absolute;left:396px;top:761px;width:246px;height:1px;background:#808080"></div>
<div style="position:absolute;left:396px;top:761px;width:1px;height:17px;background:#808080"></div>
<div style="position:absolute;left:396px;top:777px;width:246px;height:1px;background:#ffffff"></div>
<div style="position:absolute;left:641px;top:761px;width:1px;height:17px;background:#ffffff"></div>
<div style="position:absolute;left:644px;top:761px;width:236px;height:1px;background:#808080"></div>
<div style="position:absolute;left:644px;top:761px;width:1px;height:17px;background:#808080"></div>
<div style="position:absolute;left:644px;top:777px;width:236px;height:1px;background:#ffffff"></div>
<div style="position:absolute;left:879px;top:761px;width:1px;height:17px;background:#ffffff"></div>
<div style="position:absolute;left:120px;top:114px;width:42px;height:29px;background:#fff;border:1px solid #000;border-radius:7px"></div>
<div id="f25" style="position:absolute;left:123px;top:117px;white-space:nowrap;transform-origin:0 0;transform:scaleX(1.0000);font:12.5px/12px Liberation Serif;color:#800000">Entire</div>
<div id="f26" style="position:absolute;left:128px;top:129px;white-space:nowrap;transform-origin:0 0;transform:scaleX(0.9000);font:12.5px/12px Liberation Serif;color:#800000">Wave</div>
<div style="position:absolute;left:186px;top:114px;width:42px;height:29px;background:#fff;border:1px solid #000;border-radius:7px"><svg width="40" height="27" style="position:absolute;left:0;top:0"><path d="M10 5.5V25M9 5H32M9 23H32" stroke="#800000" stroke-width="2" fill="none"/><ellipse cx="21" cy="14.5" rx="9" ry="8.5" stroke="#800000" stroke-width="1.2" stroke-dasharray="2 1" fill="#fff"/><path d="M15 14.5H27" stroke="#800000" stroke-width="2"/><path d="M21 9V20" stroke="#800000" stroke-width="2"/><path d="M15 26L19 24L20 22" stroke="#800000" stroke-width="1.5" fill="none"/></svg></div>
<div style="position:absolute;left:246px;top:114px;width:42px;height:29px;background:#fff;border:1px solid #000;border-radius:7px"><svg width="40" height="27" style="position:absolute;left:0;top:0"><path d="M10 5.5V25M9 5H32M9 23H32" stroke="#800000" stroke-width="2" fill="none"/><ellipse cx="21" cy="14.5" rx="9" ry="8.5" stroke="#800000" stroke-width="1.2" stroke-dasharray="2 1" fill="#fff"/><path d="M15 14.5H27" stroke="#800000" stroke-width="2"/><path d="M15 26L19 24L20 22" stroke="#800000" stroke-width="1.5" fill="none"/></svg></div>
<div style="position:absolute;left:312px;top:114px;width:42px;height:29px;background:#fff;border:1px solid #000;border-radius:7px"><svg width="40" height="27" style="position:absolute;left:0;top:0"><path d="M21 2V6" stroke="#800000" stroke-width="2"/><ellipse cx="21" cy="14.5" rx="9.5" ry="8.5" stroke="#800000" stroke-width="1.2" stroke-dasharray="2 1" fill="none"/><path d="M15 14.5H27" stroke="#800000" stroke-width="2"/><path d="M21 9V20" stroke="#800000" stroke-width="2"/><path d="M21 23V27M15 27L19 25L20 23" stroke="#800000" stroke-width="1.6" fill="none"/></svg></div>
<div style="position:absolute;left:378px;top:114px;width:42px;height:29px;background:#fff;border:1px solid #000;border-radius:7px"><svg width="40" height="27" style="position:absolute;left:0;top:0"><path d="M21 2V6" stroke="#800000" stroke-width="2"/><ellipse cx="21" cy="14.5" rx="9.5" ry="8.5" stroke="#800000" stroke-width="1.2" stroke-dasharray="2 1" fill="none"/><path d="M15 14.5H27" stroke="#800000" stroke-width="2"/><path d="M21 23V27M15 27L19 25L20 23" stroke="#800000" stroke-width="1.6" fill="none"/></svg></div>
<div style="position:absolute;left:445px;top:114px;width:42px;height:29px;background:#fff;border:1px solid #000;border-radius:7px"><svg width="40" height="27" style="position:absolute;left:0;top:0"><path d="M10 4V25" stroke="#800000" stroke-width="2.5"/><path d="M33 4V25" stroke="#ff0000" stroke-width="2.5"/><ellipse cx="21.5" cy="14.5" rx="9" ry="8.5" stroke="#800000" stroke-width="1.2" stroke-dasharray="2 1" fill="none"/><path d="M15.5 14.5H27.5" stroke="#800000" stroke-width="2"/><path d="M21.5 9V20" stroke="#800000" stroke-width="2"/><path d="M15 27L19 25L20 23" stroke="#800000" stroke-width="1.6" fill="none"/></svg></div>
<div style="position:absolute;left:504px;top:114px;width:42px;height:29px;background:#fff;border:1px solid #000;border-radius:7px"><svg width="40" height="27" style="position:absolute;left:0;top:0"><path d="M8 14.5H36M8 14.5L19.5 3M8 14.5L19 26" stroke="#800000" stroke-width="1.4" fill="none"/></svg></div>
<div style="position:absolute;left:564px;top:114px;width:42px;height:29px;background:#fff;border:1px solid #000;border-radius:7px"><svg width="40" height="27" style="position:absolute;left:0;top:0"><path d="M7 14.5H36M36 14.5L24.5 3M36 14.5L25 26" stroke="#800000" stroke-width="1.4" fill="none"/></svg></div>
<div style="position:absolute;left:624px;top:114px;width:42px;height:29px;background:#fff;border:1px solid #000;border-radius:7px"><svg width="40" height="27" style="position:absolute;left:0;top:0"><path d="M8 14.5H36M8 14.5L19.5 3M8 14.5L19 26" stroke="#ff0000" stroke-width="1.4" fill="none"/></svg></div>
<div style="position:absolute;left:684px;top:114px;width:42px;height:29px;background:#fff;border:1px solid #000;border-radius:7px"><svg width="40" height="27" style="position:absolute;left:0;top:0"><path d="M7 14.5H36M36 14.5L24.5 3M36 14.5L25 26" stroke="#ff0000" stroke-width="1.4" fill="none"/></svg></div>
<div style="position:absolute;left:744px;top:114px;width:42px;height:29px;background:#c0c0c0;border:1px solid #800000;border-radius:8px"></div>
<div id="f27" style="position:absolute;left:751px;top:122px;white-space:nowrap;transform-origin:0 0;transform:scaleX(0.7632);font:12px/12px Liberation Sans;color:#008000">Marker</div>
<div style="position:absolute;left:173px;top:111px;width:1px;height:37px;background:#808080"></div>
<div style="position:absolute;left:174px;top:111px;width:1px;height:37px;background:#ffffff"></div>
<div style="position:absolute;left:299px;top:111px;width:1px;height:37px;background:#808080"></div>
<div style="position:absolute;left:300px;top:111px;width:1px;height:37px;background:#ffffff"></div>
<div style="position:absolute;left:366px;top:111px;width:1px;height:37px;background:#808080"></div>
<div style="position:absolute;left:367px;top:111px;width:1px;height:37px;background:#ffffff"></div>
<div style="position:absolute;left:432px;top:111px;width:1px;height:37px;background:#808080"></div>
<div style="position:absolute;left:433px;top:111px;width:1px;height:37px;background:#ffffff"></div>
<div style="position:absolute;left:795px;top:109px;width:1px;height:41px;background:#808080"></div>
<div style="position:absolute;left:796px;top:109px;width:1px;height:41px;background:#ffffff"></div>
<div style="position:absolute;left:800px;top:109px;width:1px;height:41px;background:#808080"></div>
<div style="position:absolute;left:801px;top:109px;width:1px;height:41px;background:#ffffff"></div>
<div style="position:absolute;left:807px;top:113px;width:16px;height:33px;background:#ffffff"></div>
<div style="position:absolute;left:810px;top:120px;white-space:nowrap;font-size:17.5px;line-height:20px;font-weight:bold;transform:scaleX(0.8);transform-origin:0 0">T</div>
<div style="position:absolute;left:833px;top:120px;white-space:nowrap;font-size:17.5px;line-height:20px;font-weight:bold;transform:scaleX(0.8);transform-origin:0 0">1</div>
<div style="position:absolute;left:856px;top:120px;white-space:nowrap;font-size:17.5px;line-height:20px;font-weight:bold;transform:scaleX(0.8);transform-origin:0 0">2</div>
<div style="position:absolute;left:879px;top:120px;white-space:nowrap;font-size:17.5px;line-height:20px;font-weight:bold;transform:scaleX(0.8);transform-origin:0 0">3</div>
<div style="position:absolute;left:903px;top:120px;white-space:nowrap;font-size:17.5px;line-height:20px;font-weight:bold;transform:scaleX(0.8);transform-origin:0 0">4</div>
<div style="position:absolute;left:924px;top:120px;white-space:nowrap;font-size:17.5px;line-height:20px;font-weight:bold;transform:scaleX(0.8);transform-origin:0 0">C</div>
<div style="position:absolute;left:106px;top:152px;width:126px;height:21px;background:#c0c0c0;border-top:1px solid #fff;border-left:1px solid #fff;border-right:1px solid #000;border-bottom:1px solid #000"></div>
<div style="position:absolute;left:110px;top:152px;white-space:nowrap;font-size:16.5px;line-height:20px">Signal</div>
<div style="position:absolute;left:232px;top:152px;width:30px;height:21px;background:#c0c0c0;border-top:1px solid #fff;border-left:1px solid #fff;border-right:1px solid #000;border-bottom:1px solid #000"></div>
<div style="position:absolute;left:236px;top:152px;white-space:nowrap;font-size:16.5px;line-height:20px">S...</div>
<div style="position:absolute;left:262px;top:152px;width:104px;height:21px;background:#c0c0c0;border-top:1px solid #fff;border-left:1px solid #fff;border-right:1px solid #000;border-bottom:1px solid #000"></div>
<div style="position:absolute;left:266px;top:152px;white-space:nowrap;font-size:16.5px;line-height:20px">Value</div>
<div style="position:absolute;left:111px;top:173px;white-space:nowrap;font-size:16.5px;line-height:20px;letter-spacing:-0.3px">clock</div>
<div style="position:absolute;left:237px;top:173px;white-space:nowrap;font-size:16.5px;line-height:20px;letter-spacing:-0.5px">t...</div>
<div style="position:absolute;left:267px;top:173px;white-space:nowrap;font-size:16.5px;line-height:20px">1</div>
<div style="position:absolute;left:111px;top:192px;white-space:nowrap;font-size:16.5px;line-height:20px;letter-spacing:-0.3px">[15:0]port_in_d...</div>
<div style="position:absolute;left:237px;top:192px;white-space:nowrap;font-size:16.5px;line-height:20px;letter-spacing:-0.5px">t...</div>
<div style="position:absolute;left:267px;top:192px;white-space:nowrap;font-size:16.5px;line-height:20px">16&#8217;h0000</div>
<div style="position:absolute;left:111px;top:211px;white-space:nowrap;font-size:16.5px;line-height:20px;letter-spacing:-0.3px">reset</div>
<div style="position:absolute;left:237px;top:211px;white-space:nowrap;font-size:16.5px;line-height:20px;letter-spacing:-0.5px">t...</div>
<div style="position:absolute;left:267px;top:211px;white-space:nowrap;font-size:16.5px;line-height:20px">0</div>
<div style="position:absolute;left:111px;top:230px;white-space:nowrap;font-size:16.5px;line-height:20px;letter-spacing:-0.3px">sync</div>
<div style="position:absolute;left:237px;top:230px;white-space:nowrap;font-size:16.5px;line-height:20px;letter-spacing:-0.5px">t...</div>
<div style="position:absolute;left:267px;top:230px;white-space:nowrap;font-size:16.5px;line-height:20px">0</div>
<div style="position:absolute;left:108px;top:250px;width:258px;height:18px;background:#c0c0c0"></div>
<div style="position:absolute;left:111px;top:249px;white-space:nowrap;font-size:16.5px;line-height:20px;letter-spacing:-0.3px">[15:0]port_out...</div>
<div style="position:absolute;left:237px;top:249px;white-space:nowrap;font-size:16.5px;line-height:20px;letter-spacing:-0.5px">t...</div>
<div style="position:absolute;left:267px;top:249px;white-space:nowrap;font-size:16.5px;line-height:20px">16&#8217;h004e</div>
<div style="position:absolute;left:111px;top:325px;white-space:nowrap;font-size:16.5px;line-height:20px;letter-spacing:-0.3px">port_out_data</div>
<div style="position:absolute;left:237px;top:325px;white-space:nowrap;font-size:16.5px;line-height:20px;letter-spacing:-0.5px">t...</div>
<svg style="position:absolute;left:373px;top:152px" width="568" height="283" viewBox="373 152 568 283"><rect x="373" y="152" width="568" height="22" fill="#efece5"/><rect x="373" y="163" width="2" height="11" rx="0.8" fill="#000"/><rect x="383" y="169" width="1" height="4" fill="#000"/><rect x="393" y="169" width="1" height="4" fill="#000"/><rect x="403" y="169" width="1" height="4" fill="#000"/><rect x="413" y="169" width="1" height="4" fill="#000"/><rect x="423" y="169" width="1" height="4" fill="#000"/><rect x="433" y="169" width="1" height="4" fill="#000"/><rect x="443" y="169" width="1" height="4" fill="#000"/><rect x="453" y="169" width="1" height="4" fill="#000"/><rect x="463" y="169" width="1" height="4" fill="#000"/><rect x="473" y="163" width="2" height="11" rx="0.8" fill="#000"/><rect x="483" y="169" width="1" height="4" fill="#000"/><rect x="493" y="169" width="1" height="4" fill="#000"/><rect x="503" y="169" width="1" height="4" fill="#000"/><rect x="513" y="169" width="1" height="4" fill="#000"/><rect x="523" y="169" width="1" height="4" fill="#000"/><rect x="533" y="169" width="1" height="4" fill="#000"/><rect x="543" y="169" width="1" height="4" fill="#000"/><rect x="553" y="169" width="1" height="4" fill="#000"/><rect x="563" y="169" width="1" height="4" fill="#000"/><rect x="573" y="163" width="2" height="11" rx="0.8" fill="#000"/><rect x="583" y="169" width="1" height="4" fill="#000"/><rect x="593" y="169" width="1" height="4" fill="#000"/><rect x="603" y="169" width="1" height="4" fill="#000"/><rect x="613" y="169" width="1" height="4" fill="#000"/><rect x="623" y="169" width="1" height="4" fill="#000"/><rect x="633" y="169" width="1" height="4" fill="#000"/><rect x="643" y="169" width="1" height="4" fill="#000"/><rect x="653" y="169" width="1" height="4" fill="#000"/><rect x="663" y="169" width="1" height="4" fill="#000"/><rect x="673" y="163" width="2" height="11" rx="0.8" fill="#000"/><rect x="683" y="169" width="1" height="4" fill="#000"/><rect x="693" y="169" width="1" height="4" fill="#000"/><rect x="703" y="169" width="1" height="4" fill="#000"/><rect x="713" y="169" width="1" height="4" fill="#000"/><rect x="723" y="169" width="1" height="4" fill="#000"/><rect x="733" y="169" width="1" height="4" fill="#000"/><rect x="743" y="169" width="1" height="4" fill="#000"/><rect x="753" y="169" width="1" height="4" fill="#000"/><rect x="763" y="169" width="1" height="4" fill="#000"/><rect x="773" y="163" width="2" height="11" rx="0.8" fill="#000"/><rect x="783" y="169" width="1" height="4" fill="#000"/><rect x="793" y="169" width="1" height="4" fill="#000"/><rect x="803" y="169" width="1" height="4" fill="#000"/><rect x="813" y="169" width="1" height="4" fill="#000"/><rect x="823" y="169" width="1" height="4" fill="#000"/><rect x="833" y="169" width="1" height="4" fill="#000"/><rect x="843" y="169" width="1" height="4" fill="#000"/><rect x="853" y="169" width="1" height="4" fill="#000"/><rect x="863" y="169" width="1" height="4" fill="#000"/><rect x="873" y="163" width="2" height="11" rx="0.8" fill="#000"/><rect x="883" y="169" width="1" height="4" fill="#000"/><rect x="893" y="169" width="1" height="4" fill="#000"/><rect x="903" y="169" width="1" height="4" fill="#000"/><rect x="913" y="169" width="1" height="4" fill="#000"/><rect x="923" y="169" width="1" height="4" fill="#000"/><rect x="933" y="169" width="1" height="4" fill="#000"/><rect x="373" y="177" width="568" height="13" fill="#0000ff"/><defs><pattern id="dot2" x="0" y="0" width="2" height="1" patternUnits="userSpaceOnUse"><rect x="0" y="0" width="1" height="1" fill="#0000ff"/></pattern><pattern id="dot4" x="1" y="0" width="4" height="1" patternUnits="userSpaceOnUse"><rect x="0" y="0" width="3" height="1" fill="#0000ff"/></pattern><pattern id="dith" x="0" y="0" width="2" height="2" patternUnits="userSpaceOnUse"><rect width="2" height="2" fill="#c0c0c0"/><rect width="1" height="1" fill="#fff"/><rect x="1" y="1" width="1" height="1" fill="#fff"/></pattern></defs><rect x="373" y="176" width="568" height="1" fill="url(#dot2)"/><rect x="373" y="190" width="569" height="1" fill="url(#dot2)"/><rect x="374" y="194" width="567" height="1" fill="#0000ff"/><rect x="374" y="209" width="567" height="1" fill="#0000ff"/><path d="M373 214.5H378.5V228.5H941" stroke="#0000ff" fill="none"/><path d="M373 247.5H584.5V233.5H586.5V247.5H803.5V233.5H805.5V247.5H941" stroke="#0000ff" fill="none"/><rect x="373" y="251" width="1" height="16" fill="#ff0000"/><path d="M374 258.5L378.5 251.5L382.5 258.5L378.5 266.5Z" stroke="#0000ff" fill="none"/><rect x="383" y="252" width="249" height="15" fill="#0000ff"/><rect x="383" y="251" width="249" height="1" fill="url(#dot4)"/><rect x="521" y="252" width="1" height="15" fill="#fff"/><path d="M632.5 258.5L636.5 251.5H665L673 266.5H806.5L810.5 258.5L806.5 251.5H673L665 266.5H636.5Z" stroke="#0000ff" fill="none"/><rect x="811" y="251" width="40" height="1" fill="#0000ff"/><rect x="811" y="266" width="40" height="1" fill="#0000ff"/><rect x="811" y="251" width="2" height="16" fill="#0000ff"/><rect x="815" y="251" width="2" height="16" fill="#0000ff"/><rect x="819" y="251" width="2" height="16" fill="#0000ff"/><rect x="823" y="251" width="2" height="16" fill="#0000ff"/><rect x="827" y="251" width="2" height="16" fill="#0000ff"/><rect x="831" y="251" width="2" height="16" fill="#0000ff"/><rect x="835" y="251" width="2" height="16" fill="#0000ff"/><rect x="839" y="251" width="2" height="16" fill="#0000ff"/><rect x="843" y="251" width="2" height="16" fill="#0000ff"/><rect x="847" y="251" width="2" height="16" fill="#0000ff"/><rect x="851" y="252" width="90" height="15" fill="#0000ff"/><rect x="851" y="251" width="90" height="1" fill="url(#dot4)"/><path d="M373 297.5H941M373 397.5H941" stroke="#000" stroke-dasharray="3 2"/><path d="M373 397.5H382L510 301.5V323M510 301.5L513.5 297.5H519.5V347H520.5V397.5L521.5 397.5L590.5 297.5H592.5V347H593.5V397.5H594L629.5 297.5H631V310H632V322.5H669V346.5H811.5V297.5H851V397.5L941 331" stroke="#0000ff" stroke-width="3" fill="none" stroke-linejoin="miter" stroke-miterlimit="2"/><path d="M615.5 336V397" stroke="#0000ff" stroke-width="3"/><rect x="639" y="195" width="36" height="14" fill="#efece5"/><rect x="639" y="252" width="21" height="14" fill="#efece5"/><rect x="721" y="252" width="36" height="14" fill="#efece5"/></svg>
<div id="f28" style="position:absolute;left:376px;top:152px;white-space:nowrap;transform-origin:0 0;transform:scaleX(0.8125);font-size:17.5px;line-height:16px;">0.000ns</div>
<div id="f29" style="position:absolute;left:577px;top:152px;white-space:nowrap;transform-origin:0 0;transform:scaleX(0.7872);font-size:17.5px;line-height:16px;">4000.000ns</div>
<div id="f30" style="position:absolute;left:777px;top:152px;white-space:nowrap;transform-origin:0 0;transform:scaleX(0.7979);font-size:17.5px;line-height:16px;">8000.000ns</div>
<div id="f31" style="position:absolute;left:639px;top:195px;white-space:nowrap;transform-origin:0 0;transform:scaleX(0.9722);font-size:16px;line-height:14px;">0000</div>
<div id="f32" style="position:absolute;left:639px;top:252px;white-space:nowrap;transform-origin:0 0;transform:scaleX(0.9524);font-size:16px;line-height:14px;">0...</div>
<div id="f33" style="position:absolute;left:721px;top:252px;white-space:nowrap;transform-origin:0 0;transform:scaleX(1.0000);font-size:16px;line-height:14px;">0033</div>
<div style="position:absolute;left:106px;top:435px;width:260px;height:16px;background-color:#c0c0c0;background-image:repeating-conic-gradient(#fff 0 25%,#c0c0c0 0 50%);background-size:2px 2px"></div>
<div style="position:absolute;left:106px;top:435px;width:16px;height:16px;background:#c0c0c0"></div>
<div style="position:absolute;left:106px;top:435px;width:16px;height:1px;background:#ffffff"></div>
<div style="position:absolute;left:106px;top:435px;width:1px;height:16px;background:#ffffff"></div>
<div style="position:absolute;left:106px;top:450px;width:16px;height:1px;background:#000000"></div>
<div style="position:absolute;left:121px;top:435px;width:1px;height:16px;background:#000000"></div>
<div style="position:absolute;left:107px;top:449px;width:14px;height:1px;background:#808080"></div>
<div style="position:absolute;left:120px;top:436px;width:1px;height:14px;background:#808080"></div>
<div style="position:absolute;left:107px;top:436px;width:14px;height:1px;background:#dfdfdf"></div>
<div style="position:absolute;left:107px;top:436px;width:1px;height:13px;background:#dfdfdf"></div>
<svg style="position:absolute;left:110px;top:438px" width="5" height="8"><path d="M4 0V8L0 4Z" fill="#000"/></svg>
<div style="position:absolute;left:122px;top:435px;width:226px;height:16px;background:#c0c0c0"></div>
<div style="position:absolute;left:122px;top:435px;width:226px;height:1px;background:#ffffff"></div>
<div style="position:absolute;left:122px;top:435px;width:1px;height:16px;background:#ffffff"></div>
<div style="position:absolute;left:122px;top:450px;width:226px;height:1px;background:#000000"></div>
<div style="position:absolute;left:347px;top:435px;width:1px;height:16px;background:#000000"></div>
<div style="position:absolute;left:123px;top:449px;width:224px;height:1px;background:#808080"></div>
<div style="position:absolute;left:346px;top:436px;width:1px;height:14px;background:#808080"></div>
<div style="position:absolute;left:123px;top:436px;width:224px;height:1px;background:#dfdfdf"></div>
<div style="position:absolute;left:123px;top:436px;width:1px;height:13px;background:#dfdfdf"></div>
<div style="position:absolute;left:350px;top:435px;width:16px;height:16px;background:#c0c0c0"></div>
<div style="position:absolute;left:350px;top:435px;width:16px;height:1px;background:#ffffff"></div>
<div style="position:absolute;left:350px;top:435px;width:1px;height:16px;background:#ffffff"></div>
<div style="position:absolute;left:350px;top:450px;width:16px;height:1px;background:#000000"></div>
<div style="position:absolute;left:365px;top:435px;width:1px;height:16px;background:#000000"></div>
<div style="position:absolute;left:351px;top:449px;width:14px;height:1px;background:#808080"></div>
<div style="position:absolute;left:364px;top:436px;width:1px;height:14px;background:#808080"></div>
<div style="position:absolute;left:351px;top:436px;width:14px;height:1px;background:#dfdfdf"></div>
<div style="position:absolute;left:351px;top:436px;width:1px;height:13px;background:#dfdfdf"></div>
<svg style="position:absolute;left:356px;top:438px" width="5" height="8"><path d="M0 0V8L4 4Z" fill="#000"/></svg>
<div style="position:absolute;left:373px;top:435px;width:568px;height:16px;background-color:#c0c0c0;background-image:repeating-conic-gradient(#fff 0 25%,#c0c0c0 0 50%);background-size:2px 2px"></div>
<div style="position:absolute;left:373px;top:435px;width:16px;height:16px;background:#c0c0c0"></div>
<div style="position:absolute;left:373px;top:435px;width:16px;height:1px;background:#ffffff"></div>
<div style="position:absolute;left:373px;top:435px;width:1px;height:16px;background:#ffffff"></div>
<div style="position:absolute;left:373px;top:450px;width:16px;height:1px;background:#000000"></div>
<div style="position:absolute;left:388px;top:435px;width:1px;height:16px;background:#000000"></div>
<div style="position:absolute;left:374px;top:449px;width:14px;height:1px;background:#808080"></div>
<div style="position:absolute;left:387px;top:436px;width:1px;height:14px;background:#808080"></div>
<div style="position:absolute;left:374px;top:436px;width:14px;height:1px;background:#dfdfdf"></div>
<div style="position:absolute;left:374px;top:436px;width:1px;height:13px;background:#dfdfdf"></div>
<svg style="position:absolute;left:377px;top:438px" width="5" height="8"><path d="M4 0V8L0 4Z" fill="#000"/></svg>
<div style="position:absolute;left:389px;top:435px;width:33px;height:16px;background:#c0c0c0"></div>
<div style="position:absolute;left:389px;top:435px;width:33px;height:1px;background:#ffffff"></div>
<div style="position:absolute;left:389px;top:435px;width:1px;height:16px;background:#ffffff"></div>
<div style="position:absolute;left:389px;top:450px;width:33px;height:1px;background:#000000"></div>
<div style="position:absolute;left:421px;top:435px;width:1px;height:16px;background:#000000"></div>
<div style="position:absolute;left:390px;top:449px;width:31px;height:1px;background:#808080"></div>
<div style="position:absolute;left:420px;top:436px;width:1px;height:14px;background:#808080"></div>
<div style="position:absolute;left:390px;top:436px;width:31px;height:1px;background:#dfdfdf"></div>
<div style="position:absolute;left:390px;top:436px;width:1px;height:13px;background:#dfdfdf"></div>
<div style="position:absolute;left:925px;top:435px;width:16px;height:16px;background:#c0c0c0"></div>
<div style="position:absolute;left:925px;top:435px;width:16px;height:1px;background:#ffffff"></div>
<div style="position:absolute;left:925px;top:435px;width:1px;height:16px;background:#ffffff"></div>
<div style="position:absolute;left:925px;top:450px;width:16px;height:1px;background:#000000"></div>
<div style="position:absolute;left:940px;top:435px;width:1px;height:16px;background:#000000"></div>
<div style="position:absolute;left:926px;top:449px;width:14px;height:1px;background:#808080"></div>
<div style="position:absolute;left:939px;top:436px;width:1px;height:14px;background:#808080"></div>
<div style="position:absolute;left:926px;top:436px;width:14px;height:1px;background:#dfdfdf"></div>
<div style="position:absolute;left:926px;top:436px;width:1px;height:13px;background:#dfdfdf"></div>
<svg style="position:absolute;left:931px;top:438px" width="5" height="8"><path d="M0 0V8L4 4Z" fill="#000"/></svg>
<div id="f34" style="position:absolute;left:105px;top:456px;white-space:nowrap;transform-origin:0 0;transform:scaleX(0.9487);font-size:11.5px;line-height:15px;">1 items</div>
<div id="f35" style="position:absolute;left:149px;top:456px;white-space:nowrap;transform-origin:0 0;transform:scaleX(0.8222);font-size:11.5px;line-height:15px;">Mag=T1</div>
<div id="f36" style="position:absolute;left:316px;top:456px;white-space:nowrap;transform-origin:0 0;transform:scaleX(0.9077);font-size:11.5px;line-height:15px;">cursormode</div>
<div id="f37" style="position:absolute;left:412px;top:456px;white-space:nowrap;transform-origin:0 0;transform:scaleX(0.9615);font-size:11.5px;line-height:15px;">STATUS4</div>
<div id="f38" style="position:absolute;left:508px;top:456px;white-space:nowrap;transform-origin:0 0;transform:scaleX(0.9615);font-size:11.5px;line-height:15px;">STATUS5</div>
<div id="f39" style="position:absolute;left:605px;top:456px;white-space:nowrap;transform-origin:0 0;transform:scaleX(0.9615);font-size:11.5px;line-height:15px;">STATUS6</div>
<div id="f40" style="position:absolute;left:718px;top:456px;white-space:nowrap;transform-origin:0 0;transform:scaleX(0.8500);font-size:11.5px;line-height:15px;">M1:</div>
<div id="f41" style="position:absolute;left:815px;top:456px;white-space:nowrap;transform-origin:0 0;transform:scaleX(0.8000);font-size:11.5px;line-height:15px;">M2:</div>
<div id="f42" style="position:absolute;left:909px;top:456px;white-space:nowrap;transform-origin:0 0;transform:scaleX(0.8500);font-size:11.5px;line-height:15px;">M3:</div>
<div style="position:absolute;left:11px;top:111px;width:89px;height:217px;overflow:hidden"><div style="position:absolute;left:10px;top:0px;white-space:nowrap;font-family:'Liberation Sans', sans-serif;font-size:11px;line-height:15.5px;letter-spacing:0.6px;transform:scaleY(1.1);transform-origin:0 0;">E:¥veritakwinLib</div><div style="position:absolute;left:10px;top:17px;white-space:nowrap;font-family:'Liberation Sans', sans-serif;font-size:11px;line-height:15.5px;letter-spacing:0.6px;transform:scaleY(1.1);transform-origin:0 0;">E:¥veritakwinLib</div><div style="position:absolute;left:10px;top:34px;white-space:nowrap;font-family:'Liberation Sans', sans-serif;font-size:11px;line-height:15.5px;letter-spacing:0.6px;transform:scaleY(1.1);transform-origin:0 0;">E:¥veritakwinLib</div><div style="position:absolute;left:10px;top:85px;white-space:nowrap;font-family:'Liberation Sans', sans-serif;font-size:11px;line-height:15.5px;letter-spacing:0.6px;transform:scaleY(1.1);transform-origin:0 0;">E:¥veritakwinLib</div><div style="position:absolute;left:10px;top:102px;white-space:nowrap;font-family:'Liberation Sans', sans-serif;font-size:11px;line-height:15.5px;letter-spacing:0.6px;transform:scaleY(1.1);transform-origin:0 0;">Verilog<svg width="10" height="9.5" viewBox="0 0 12 12" preserveAspectRatio="none" style="vertical-align:-1px;overflow:visible"><use href="#g306e" fill="none" stroke="currentColor" stroke-width="1.05"/></svg><svg width="10" height="9.5" viewBox="0 0 12 12" preserveAspectRatio="none" style="vertical-align:-1px;overflow:visible"><use href="#g30b7" fill="none" stroke="currentColor" stroke-width="1.05"/></svg><svg width="10" height="9.5" viewBox="0 0 12 12" preserveAspectRatio="none" style="vertical-align:-1px;overflow:visible"><use href="#g30df" fill="none" stroke="currentColor" stroke-width="1.05"/></svg><svg width="9" height="9.5" viewBox="0 0 12 12" preserveAspectRatio="none" style="vertical-align:-1px;overflow:visible"><use href="#g30e5" fill="none" stroke="currentColor" stroke-width="1.05"/></svg><svg width="10" height="9.5" viewBox="0 0 12 12" preserveAspectRatio="none" style="vertical-align:-1px;overflow:visible"><use href="#g30ec" fill="none" stroke="currentColor" stroke-width="1.05"/></svg><svg width="10" height="9.5" viewBox="0 0 12 12" preserveAspectRatio="none" style="vertical-align:-1px;overflow:visible"><use href="#g30fc" fill="none" stroke="currentColor" stroke-width="1.05"/></svg></div><div style="position:absolute;left:10px;top:119px;white-space:nowrap;font-family:'Liberation Sans', sans-serif;font-size:11px;line-height:15.5px;letter-spacing:0.6px;transform:scaleY(1.1);transform-origin:0 0;">-----------------</div><div style="position:absolute;left:10px;top:153px;white-space:nowrap;font-family:'Liberation Sans', sans-serif;font-size:11px;line-height:15.5px;letter-spacing:0.6px;transform:scaleY(1.1);transform-origin:0 0;">SDF: timing check</div><div style="position:absolute;left:10px;top:170px;white-space:nowrap;font-family:'Liberation Sans', sans-serif;font-size:11px;line-height:15.5px;letter-spacing:0.6px;transform:scaleY(1.1);transform-origin:0 0;">SDF: timing check</div></div>
<div style="position:absolute;left:11px;top:337px;width:89px;height:413px;overflow:hidden;color:#00ff00"><div style="position:absolute;left:10px;top:0px;white-space:nowrap;font-family:'Liberation Sans', sans-serif;font-size:11px;line-height:15.5px;letter-spacing:0.6px;transform:scaleY(1.1);transform-origin:0 0;">E:¥altera¥quartus</div><div style="position:absolute;left:10px;top:17px;white-space:nowrap;font-family:'Liberation Sans', sans-serif;font-size:11px;line-height:15.5px;letter-spacing:0.6px;transform:scaleY(1.1);transform-origin:0 0;">Total 187988Byte</div><div style="position:absolute;left:10px;top:34px;white-space:nowrap;font-family:'Liberation Sans', sans-serif;font-size:11px;line-height:15.5px;letter-spacing:0.6px;transform:scaleY(1.1);transform-origin:0 0;">E:¥altera¥quartus</div><div style="position:absolute;left:10px;top:51px;white-space:nowrap;font-family:'Liberation Sans', sans-serif;font-size:11px;line-height:15.5px;letter-spacing:0.6px;transform:scaleY(1.1);transform-origin:0 0;">Total 187988Byte</div><div style="position:absolute;left:10px;top:68px;white-space:nowrap;font-family:'Liberation Sans', sans-serif;font-size:11px;line-height:15.5px;letter-spacing:0.6px;transform:scaleY(1.1);transform-origin:0 0;">Elaboration Phase</div><div style="position:absolute;left:10px;top:85px;white-space:nowrap;font-family:'Liberation Sans', sans-serif;font-size:11px;line-height:15.5px;letter-spacing:0.6px;transform:scaleY(1.1);transform-origin:0 0;"><svg width="10" height="9.5" viewBox="0 0 12 12" preserveAspectRatio="none" style="vertical-align:-1px;overflow:visible"><use href="#g30b3" fill="none" stroke="currentColor" stroke-width="1.05"/></svg><svg width="10" height="9.5" viewBox="0 0 12 12" preserveAspectRatio="none" style="vertical-align:-1px;overflow:visible"><use href="#g30fc" fill="none" stroke="currentColor" stroke-width="1.05"/></svg><svg width="10" height="9.5" viewBox="0 0 12 12" preserveAspectRatio="none" style="vertical-align:-1px;overflow:visible"><use href="#g30c9" fill="none" stroke="currentColor" stroke-width="1.05"/></svg><svg width="12" height="9.5" viewBox="0 0 12 12" preserveAspectRatio="none" style="vertical-align:-1px;overflow:visible"><use href="#g751f" fill="none" stroke="currentColor" stroke-width="1.05"/></svg><svg width="12" height="9.5" viewBox="0 0 12 12" preserveAspectRatio="none" style="vertical-align:-1px;overflow:visible"><use href="#g6210" fill="none" stroke="currentColor" stroke-width="1.05"/></svg><svg width="12" height="9.5" viewBox="0 0 12 12" preserveAspectRatio="none" style="vertical-align:-1px;overflow:visible"><use href="#g7d42" fill="none" stroke="currentColor" stroke-width="1.05"/></svg><svg width="12" height="9.5" viewBox="0 0 12 12" preserveAspectRatio="none" style="vertical-align:-1px;overflow:visible"><use href="#g4e86" fill="none" stroke="currentColor" stroke-width="1.05"/></svg></div><div style="position:absolute;left:10px;top:102px;white-space:nowrap;font-family:'Liberation Sans', sans-serif;font-size:11px;line-height:15.5px;letter-spacing:0.6px;transform:scaleY(1.1);transform-origin:0 0;">code<svg width="12" height="9.5" viewBox="0 0 12 12" preserveAspectRatio="none" style="vertical-align:-1px;overflow:visible"><use href="#g751f" fill="none" stroke="currentColor" stroke-width="1.05"/></svg><svg width="12" height="9.5" viewBox="0 0 12 12" preserveAspectRatio="none" style="vertical-align:-1px;overflow:visible"><use href="#g6210" fill="none" stroke="currentColor" stroke-width="1.05"/></svg><svg width="10" height="9.5" viewBox="0 0 12 12" preserveAspectRatio="none" style="vertical-align:-1px;overflow:visible"><use href="#g304c" fill="none" stroke="currentColor" stroke-width="1.05"/></svg><svg width="12" height="9.5" viewBox="0 0 12 12" preserveAspectRatio="none" style="vertical-align:-1px;overflow:visible"><use href="#g7d42" fill="none" stroke="currentColor" stroke-width="1.05"/></svg><svg width="12" height="9.5" viewBox="0 0 12 12" preserveAspectRatio="none" style="vertical-align:-1px;overflow:visible"><use href="#g4e86" fill="none" stroke="currentColor" stroke-width="1.05"/></svg></div><div style="position:absolute;left:10px;top:119px;white-space:nowrap;font-family:'Liberation Sans', sans-serif;font-size:11px;line-height:15.5px;letter-spacing:0.6px;transform:scaleY(1.1);transform-origin:0 0;">Top Module (<svg width="10" height="9.5" viewBox="0 0 12 12" preserveAspectRatio="none" style="vertical-align:-1px;overflow:visible"><use href="#g306f" fill="none" stroke="currentColor" stroke-width="1.05"/></svg></div><div style="position:absolute;left:10px;top:136px;white-space:nowrap;font-family:'Liberation Sans', sans-serif;font-size:11px;line-height:15.5px;letter-spacing:0.6px;transform:scaleY(1.1);transform-origin:0 0;">E:¥veritakwinLib</div><div style="position:absolute;left:10px;top:153px;white-space:nowrap;font-family:'Liberation Sans', sans-serif;font-size:11px;line-height:15.5px;letter-spacing:0.6px;transform:scaleY(1.1);transform-origin:0 0;">Scanning wave</div><div style="position:absolute;left:10px;top:170px;white-space:nowrap;font-family:'Liberation Sans', sans-serif;font-size:11px;line-height:15.5px;letter-spacing:0.6px;transform:scaleY(1.1);transform-origin:0 0;">Total 00hours</div><div style="position:absolute;left:10px;top:187px;white-space:nowrap;font-family:'Liberation Sans', sans-serif;font-size:11px;line-height:15.5px;letter-spacing:0.6px;transform:scaleY(1.1);transform-origin:0 0;">Code Optimize</div><div style="position:absolute;left:10px;top:204px;white-space:nowrap;font-family:'Liberation Sans', sans-serif;font-size:11px;line-height:15.5px;letter-spacing:0.6px;transform:scaleY(1.1);transform-origin:0 0;">Total 187988Byte</div><div style="position:absolute;left:10px;top:221px;white-space:nowrap;font-family:'Liberation Sans', sans-serif;font-size:11px;line-height:15.5px;letter-spacing:0.6px;transform:scaleY(1.1);transform-origin:0 0;">Verilog&nbsp; Simulat</div><div style="position:absolute;left:10px;top:238px;white-space:nowrap;font-family:'Liberation Sans', sans-serif;font-size:11px;line-height:15.5px;letter-spacing:0.6px;transform:scaleY(1.1);transform-origin:0 0;">Reading SDF File</div><div style="position:absolute;left:10px;top:255px;white-space:nowrap;font-family:'Liberation Sans', sans-serif;font-size:11px;line-height:15.5px;letter-spacing:0.6px;transform:scaleY(1.1);transform-origin:0 0;">Finished Reading</div><div style="position:absolute;left:10px;top:272px;white-space:nowrap;font-family:'Liberation Sans', sans-serif;font-size:11px;line-height:15.5px;letter-spacing:0.6px;transform:scaleY(1.1);transform-origin:0 0;">SDF Condition</div><div style="position:absolute;left:10px;top:289px;white-space:nowrap;font-family:'Liberation Sans', sans-serif;font-size:11px;line-height:15.5px;letter-spacing:0.6px;transform:scaleY(1.1);transform-origin:0 0;"><svg width="10" height="9.5" viewBox="0 0 12 12" preserveAspectRatio="none" style="vertical-align:-1px;overflow:visible"><use href="#g30d0" fill="none" stroke="currentColor" stroke-width="1.05"/></svg><svg width="8" height="9.5" viewBox="0 0 12 12" preserveAspectRatio="none" style="vertical-align:-1px;overflow:visible"><use href="#g30c3" fill="none" stroke="currentColor" stroke-width="1.05"/></svg><svg width="10" height="9.5" viewBox="0 0 12 12" preserveAspectRatio="none" style="vertical-align:-1px;overflow:visible"><use href="#g30af" fill="none" stroke="currentColor" stroke-width="1.05"/></svg><svg width="10" height="9.5" viewBox="0 0 12 12" preserveAspectRatio="none" style="vertical-align:-1px;overflow:visible"><use href="#g30a2" fill="none" stroke="currentColor" stroke-width="1.05"/></svg><svg width="10" height="9.5" viewBox="0 0 12 12" preserveAspectRatio="none" style="vertical-align:-1px;overflow:visible"><use href="#g30ce" fill="none" stroke="currentColor" stroke-width="1.05"/></svg><svg width="10" height="9.5" viewBox="0 0 12 12" preserveAspectRatio="none" style="vertical-align:-1px;overflow:visible"><use href="#g30c6" fill="none" stroke="currentColor" stroke-width="1.05"/></svg><svg width="10" height="9.5" viewBox="0 0 12 12" preserveAspectRatio="none" style="vertical-align:-1px;overflow:visible"><use href="#g30fc" fill="none" stroke="currentColor" stroke-width="1.05"/></svg><svg width="10" height="9.5" viewBox="0 0 12 12" preserveAspectRatio="none" style="vertical-align:-1px;overflow:visible"><use href="#g30b7" fill="none" stroke="currentColor" stroke-width="1.05"/></svg></div><div style="position:absolute;left:10px;top:306px;white-space:nowrap;font-family:'Liberation Sans', sans-serif;font-size:11px;line-height:15.5px;letter-spacing:0.6px;transform:scaleY(1.1);transform-origin:0 0;"><svg width="10" height="9.5" viewBox="0 0 12 12" preserveAspectRatio="none" style="vertical-align:-1px;overflow:visible"><use href="#g30d0" fill="none" stroke="currentColor" stroke-width="1.05"/></svg><svg width="8" height="9.5" viewBox="0 0 12 12" preserveAspectRatio="none" style="vertical-align:-1px;overflow:visible"><use href="#g30c3" fill="none" stroke="currentColor" stroke-width="1.05"/></svg><svg width="10" height="9.5" viewBox="0 0 12 12" preserveAspectRatio="none" style="vertical-align:-1px;overflow:visible"><use href="#g30af" fill="none" stroke="currentColor" stroke-width="1.05"/></svg><svg width="10" height="9.5" viewBox="0 0 12 12" preserveAspectRatio="none" style="vertical-align:-1px;overflow:visible"><use href="#g30a2" fill="none" stroke="currentColor" stroke-width="1.05"/></svg><svg width="10" height="9.5" viewBox="0 0 12 12" preserveAspectRatio="none" style="vertical-align:-1px;overflow:visible"><use href="#g30ce" fill="none" stroke="currentColor" stroke-width="1.05"/></svg><svg width="10" height="9.5" viewBox="0 0 12 12" preserveAspectRatio="none" style="vertical-align:-1px;overflow:visible"><use href="#g30c6" fill="none" stroke="currentColor" stroke-width="1.05"/></svg><svg width="10" height="9.5" viewBox="0 0 12 12" preserveAspectRatio="none" style="vertical-align:-1px;overflow:visible"><use href="#g30fc" fill="none" stroke="currentColor" stroke-width="1.05"/></svg><svg width="10" height="9.5" viewBox="0 0 12 12" preserveAspectRatio="none" style="vertical-align:-1px;overflow:visible"><use href="#g30b7" fill="none" stroke="currentColor" stroke-width="1.05"/></svg></div><div style="position:absolute;left:10px;top:323px;white-space:nowrap;font-family:'Liberation Sans', sans-serif;font-size:11px;line-height:15.5px;letter-spacing:0.6px;transform:scaleY(1.1);transform-origin:0 0;">PORT Delay<svg width="10" height="9.5" viewBox="0 0 12 12" preserveAspectRatio="none" style="vertical-align:-1px;overflow:visible"><use href="#g3092" fill="none" stroke="currentColor" stroke-width="1.05"/></svg></div><div style="position:absolute;left:10px;top:340px;white-space:nowrap;font-family:'Liberation Sans', sans-serif;font-size:11px;line-height:15.5px;letter-spacing:0.6px;transform:scaleY(1.1);transform-origin:0 0;">IOPATH Delay<svg width="10" height="9.5" viewBox="0 0 12 12" preserveAspectRatio="none" style="vertical-align:-1px;overflow:visible"><use href="#g3092" fill="none" stroke="currentColor" stroke-width="1.05"/></svg></div><div style="position:absolute;left:10px;top:357px;white-space:nowrap;font-family:'Liberation Sans', sans-serif;font-size:11px;line-height:15.5px;letter-spacing:0.6px;transform:scaleY(1.1);transform-origin:0 0;">Timing Check</div><div style="position:absolute;left:10px;top:374px;white-space:nowrap;font-family:'Liberation Sans', sans-serif;font-size:11px;line-height:15.5px;letter-spacing:0.6px;transform:scaleY(1.1);transform-origin:0 0;"><svg width="10" height="9.5" viewBox="0 0 12 12" preserveAspectRatio="none" style="vertical-align:-1px;overflow:visible"><use href="#g30d0" fill="none" stroke="currentColor" stroke-width="1.05"/></svg><svg width="8" height="9.5" viewBox="0 0 12 12" preserveAspectRatio="none" style="vertical-align:-1px;overflow:visible"><use href="#g30c3" fill="none" stroke="currentColor" stroke-width="1.05"/></svg><svg width="10" height="9.5" viewBox="0 0 12 12" preserveAspectRatio="none" style="vertical-align:-1px;overflow:visible"><use href="#g30af" fill="none" stroke="currentColor" stroke-width="1.05"/></svg><svg width="10" height="9.5" viewBox="0 0 12 12" preserveAspectRatio="none" style="vertical-align:-1px;overflow:visible"><use href="#g30a2" fill="none" stroke="currentColor" stroke-width="1.05"/></svg><svg width="10" height="9.5" viewBox="0 0 12 12" preserveAspectRatio="none" style="vertical-align:-1px;overflow:visible"><use href="#g30ce" fill="none" stroke="currentColor" stroke-width="1.05"/></svg><svg width="10" height="9.5" viewBox="0 0 12 12" preserveAspectRatio="none" style="vertical-align:-1px;overflow:visible"><use href="#g30c6" fill="none" stroke="currentColor" stroke-width="1.05"/></svg><svg width="10" height="9.5" viewBox="0 0 12 12" preserveAspectRatio="none" style="vertical-align:-1px;overflow:visible"><use href="#g30fc" fill="none" stroke="currentColor" stroke-width="1.05"/></svg><svg width="10" height="9.5" viewBox="0 0 12 12" preserveAspectRatio="none" style="vertical-align:-1px;overflow:visible"><use href="#g30b7" fill="none" stroke="currentColor" stroke-width="1.05"/></svg></div></div>
<svg style="position:absolute;left:112px;top:506px" width="12" height="10"><rect x="2.5" y="0.5" width="8" height="8" fill="#fff" stroke="#808080"/><path d="M4.5 4.5H8.5M6.5 2.5V6.5" stroke="#000" shape-rendering="crispEdges"/><rect x="0" y="4" width="1" height="1" fill="#808080"/></svg>
<div style="position:absolute;left:128px;top:503px;width:24px;height:13px;background:#c0c0c0"></div>
<div style="position:absolute;left:130px;top:501px;white-space:nowrap;font-size:12px;line-height:16px">test</div>
<div style="position:absolute;left:241px;top:502px;width:15px;height:16px;border:1px solid #0000ff;background:#fff"></div>
<div id="f43" style="position:absolute;left:246px;top:504px;white-space:nowrap;transform-origin:0 0;transform:scaleX(0.6667);font-size:12.5px;line-height:14px;color:#0000ff">R</div>
<div id="f44" style="position:absolute;left:257px;top:503px;white-space:nowrap;transform-origin:0 0;transform:scaleX(0.9286);font-size:12px;line-height:15px">clock</div>
<div style="position:absolute;left:241px;top:519px;width:15px;height:16px;border:1px solid #0000ff;background:#fff"></div>
<div id="f45" style="position:absolute;left:246px;top:521px;white-space:nowrap;transform-origin:0 0;transform:scaleX(0.6667);font-size:12.5px;line-height:14px;color:#0000ff">R</div>
<div id="f46" style="position:absolute;left:257px;top:520px;white-space:nowrap;transform-origin:0 0;transform:scaleX(0.8687);font-size:12px;line-height:15px">port_in_data[15:0]</div>
<div style="position:absolute;left:241px;top:536px;width:15px;height:16px;border:1px solid #0000ff;background:#fff"></div>
<div id="f47" style="position:absolute;left:246px;top:538px;white-space:nowrap;transform-origin:0 0;transform:scaleX(0.6667);font-size:12.5px;line-height:14px;color:#0000ff">R</div>
<div id="f48" style="position:absolute;left:257px;top:537px;white-space:nowrap;transform-origin:0 0;transform:scaleX(0.9259);font-size:12px;line-height:15px">reset</div>
<div style="position:absolute;left:241px;top:553px;width:15px;height:16px;border:1px solid #0000ff;background:#fff"></div>
<div id="f49" style="position:absolute;left:246px;top:555px;white-space:nowrap;transform-origin:0 0;transform:scaleX(0.6667);font-size:12.5px;line-height:14px;color:#0000ff">R</div>
<div id="f50" style="position:absolute;left:257px;top:554px;white-space:nowrap;transform-origin:0 0;transform:scaleX(0.9200);font-size:12px;line-height:15px">sync</div>
<div style="position:absolute;left:242px;top:570px;width:14px;height:16px;border:1px solid #00ff00;background:#fff"></div>
<svg style="position:absolute;left:247px;top:573px" width="6" height="10"><rect x="0" y="0" width="1" height="5" fill="#00ff00"/><rect x="2" y="0" width="1" height="5" fill="#00ff00"/><rect x="4" y="0" width="1" height="5" fill="#00ff00"/><rect x="1" y="5" width="1" height="4" fill="#00ff00"/><rect x="3" y="5" width="1" height="4" fill="#00ff00"/></svg>
<div style="position:absolute;left:256px;top:570px;width:98px;height:17px;background:#c0c0c0"></div>
<div id="f51" style="position:absolute;left:257px;top:571px;white-space:nowrap;transform-origin:0 0;transform:scaleX(0.8868);font-size:12px;line-height:15px">port_out_data[15:0]</div>
<svg style="position:absolute;left:6px;top:5px" width="17" height="16"><path d="M2 1L10 9" stroke="#20c060" stroke-width="1.2"/><path d="M6 2Q9 0 12 1Q14 2 13 4L15 5" stroke="#10a050" stroke-width="2" fill="none"/><ellipse cx="8" cy="12" rx="6" ry="3" fill="#10b060"/><circle cx="5" cy="11" r="1.2" fill="#a0ffc0"/><path d="M2 15H16" stroke="#c0c0a0"/></svg>
<svg style="position:absolute;left:106px;top:91px" width="15" height="13"><rect x="0" y="0" width="15" height="13" fill="#fffff4"/><rect x="0" y="0" width="15" height="2" fill="#1878d8"/><rect x="14" y="0" width="1" height="13" fill="#3080d8"/><rect x="0" y="12" width="15" height="1" fill="#1848a0"/><rect x="12" y="0" width="2" height="2" fill="#ff6020"/></svg>
<svg style="position:absolute;left:106px;top:483px" width="15" height="13"><rect x="0" y="0" width="15" height="13" fill="#fffff4"/><rect x="0" y="0" width="15" height="2" fill="#1878d8"/><rect x="14" y="0" width="1" height="13" fill="#3080d8"/><rect x="0" y="12" width="15" height="1" fill="#1848a0"/><rect x="12" y="0" width="2" height="2" fill="#ff6020"/></svg>
<svg style="position:absolute;left:12px;top:90px" width="16" height="16"><path d="M0.5 0.5H14.5V10.5L12.5 12.5H10.5L9.5 14.5H6.5L5.5 13.5H2.5L1.5 14.5H0.5Z" fill="#fff" stroke="#000"/><path d="M3 9.5H12M3 11.5H9" stroke="#c0c0c0"/><rect x="13" y="12" width="2" height="2" fill="#008080"/></svg>
<div id="f52" style="position:absolute;left:104px;top:761px;white-space:nowrap;transform-origin:0 0;transform:scaleX(0.9038);font-size:11.5px;line-height:16px">Simulator</div>
<div id="f53" style="position:absolute;left:202px;top:761px;white-space:nowrap;transform-origin:0 0;transform:scaleX(0.9024);font-size:11.5px;line-height:16px">WaveformView</div>
<div id="f54" style="position:absolute;left:300px;top:761px;white-space:nowrap;transform-origin:0 0;transform:scaleX(0.9268);font-size:11.5px;line-height:16px">Archive</div>
<div id="f55" style="position:absolute;left:398px;top:761px;white-space:nowrap;transform-origin:0 0;transform:scaleX(0.9152);font-size:11.5px;line-height:16px">Time=22818048 Disk=&nbsp; 2.0MB</div>
<div id="f56" style="position:absolute;left:646px;top:761px;white-space:nowrap;transform-origin:0 0;transform:scaleX(0.9365);font-size:11.5px;line-height:16px">status=12 0</div>
<svg style="position:absolute;left:932px;top:765px" width="12" height="12"><path d="M11 1L1 11M11 5L5 11M11 9L9 11" stroke="#fff"/><path d="M12 1L1 12M12 2L2 12M12 5L5 12M12 6L6 12M12 9L9 12M12 10L10 12" stroke="#808080"/></svg>
<svg style="position:absolute;left:929px;top:460px" width="12" height="12"><path d="M11 1L1 11M11 5L5 11M11 9L9 11" stroke="#fff"/><path d="M12 1L1 12M12 2L2 12M12 5L5 12M12 6L6 12M12 9L9 12M12 10L10 12" stroke="#808080"/></svg>
</div></body></html>
